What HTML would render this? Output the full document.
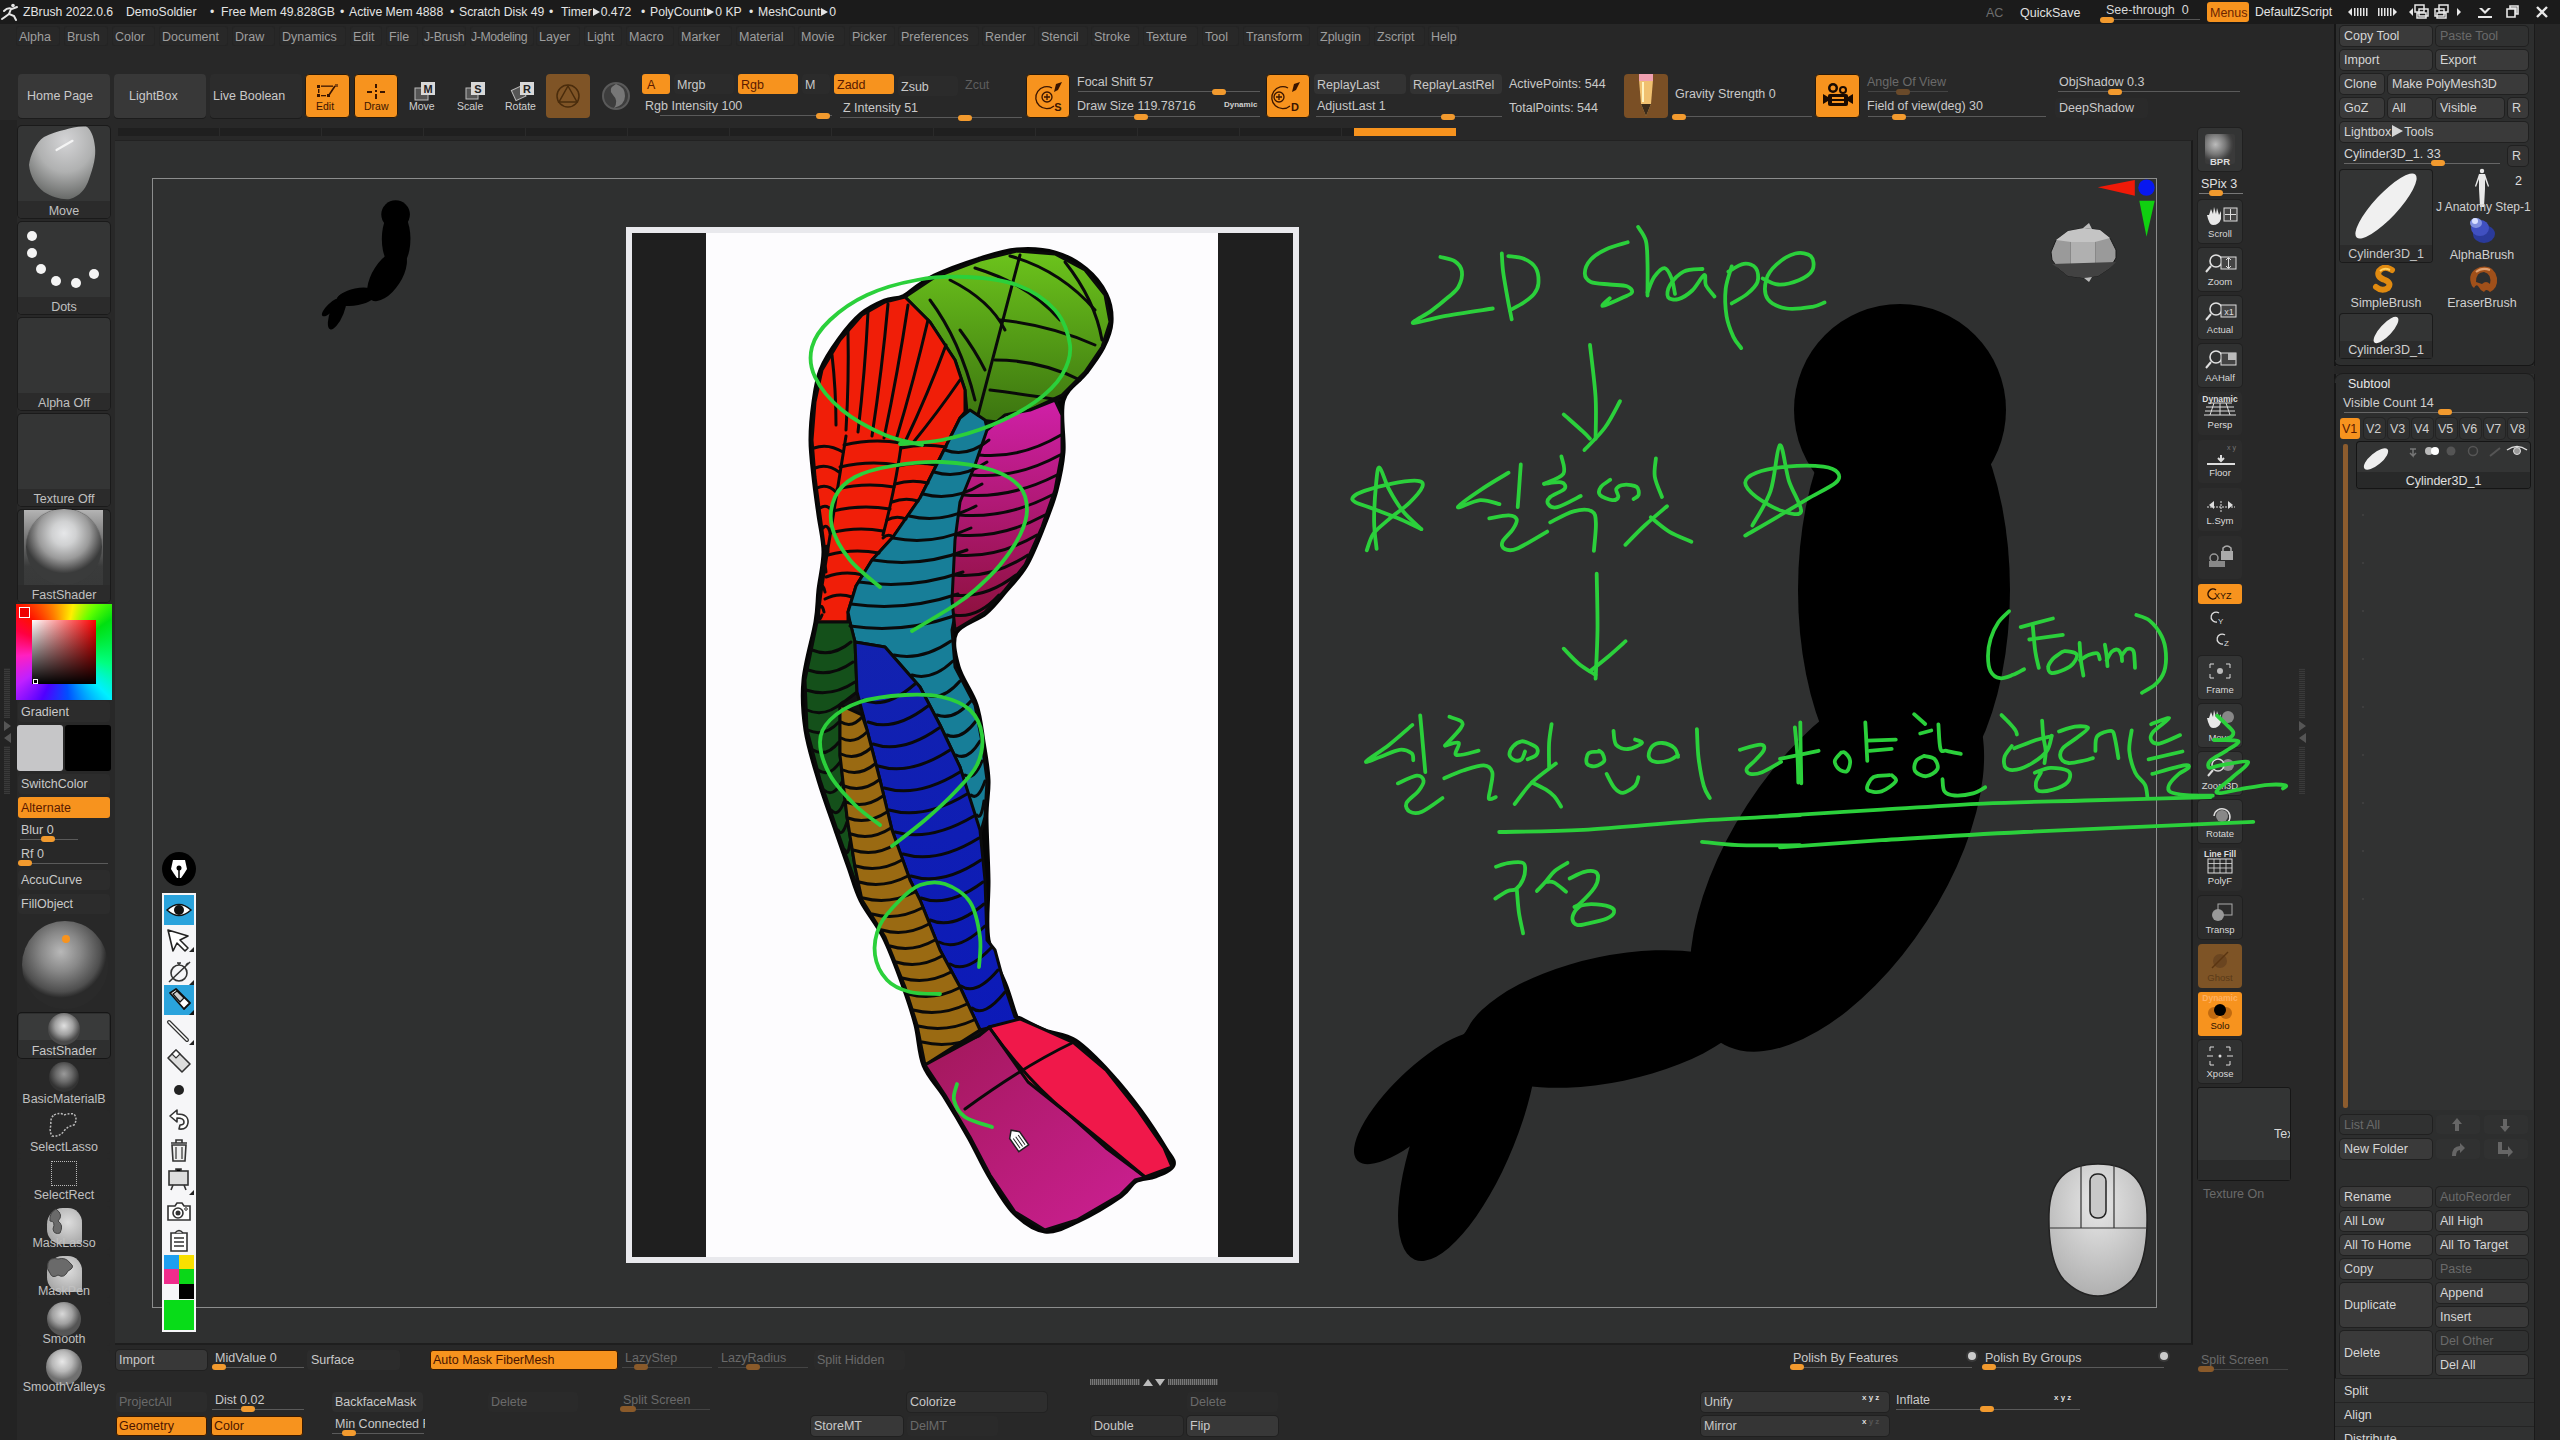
<!DOCTYPE html>
<html><head><meta charset="utf-8">
<style>
*{margin:0;padding:0;box-sizing:border-box}
html,body{width:2560px;height:1440px;overflow:hidden;background:#282828;font-family:"Liberation Sans",sans-serif;color:#c8c8c8}
.a{position:absolute}
.t{position:absolute;white-space:nowrap;font-size:12.5px;line-height:17px;color:#c9c9c9}
.b{position:absolute;background:#383838;border-radius:4px;box-shadow:0 1px 0 #1c1c1c}
.bd{position:absolute;background:#2b2b2b;border-radius:4px}
.o{position:absolute;background:#f7931e;border-radius:4px}
.mi{position:absolute;top:26px;height:20px;padding-top:1px;background:#282828;border-radius:3px;font-size:12.5px;line-height:20px;color:#9e9e9e;padding-left:3px;white-space:nowrap;box-shadow:inset 0 0 0 1px #242424}
.tri{display:inline-block;width:0;height:0;border-left:7px solid #e4e4e4;border-top:4.5px solid transparent;border-bottom:4.5px solid transparent;margin:0 1px 0 1px;vertical-align:0px}
.knob{position:absolute;width:14px;height:6px;background:#f29a2e;border-radius:3px}
.sl{position:absolute;height:1px;background:#5a5a5a}
</style></head><body>
<!-- title bar -->
<div class="a" style="left:0;top:0;width:2560px;height:24px;background:#1b1b1b"></div>
<!-- menu bar -->
<div class="a" style="left:0;top:24px;width:2334px;height:26px;background:#272727"></div>
<!-- left tray -->
<div class="a" style="left:0;top:120px;width:114px;height:1320px;background:#282828"></div>
<!-- canvas -->
<div class="a" style="left:115px;top:140px;width:2078px;height:1205px;background:#2f3030;border-right:2px solid #1a1a1a;border-bottom:2px solid #1e1e1e;border-top:1px solid #222"></div>
<div class="a" style="left:152px;top:178px;width:2005px;height:1130px;border:1px solid #8c8d8d"></div>
<!-- document image -->
<div class="a" style="left:626px;top:227px;width:673px;height:1036px;background:#e9e9ed"></div>
<div class="a" style="left:632px;top:233px;width:661px;height:1024px;background:#1f1f1f"></div>
<div class="a" style="left:706px;top:233px;width:512px;height:1024px;background:#fdfcfe"></div>
<!-- right tray -->


<svg class="a" style="left:0;top:0" width="2560" height="1440" viewBox="0 0 2560 1440">
<defs><g id="sil" fill="#000">
<circle cx="1900" cy="410" r="106"/>
<ellipse cx="1904" cy="590" rx="106" ry="220"/>
<ellipse cx="1837" cy="863" rx="214" ry="107" transform="rotate(-57 1837 863)"/>
<ellipse cx="1611" cy="1019" rx="150" ry="63" transform="rotate(-11.7 1611 1019)"/>
<ellipse cx="1422" cy="1098" rx="90" ry="30" transform="rotate(-44 1422 1098)"/>
<ellipse cx="1468" cy="1128" rx="142" ry="49" transform="rotate(-68 1468 1128)"/>
</g></defs>
<use href="#sil"/>
<use href="#sil" transform="translate(139.1 159.15) scale(0.135)"/>
</svg>
<svg class="a" style="left:0;top:0" width="2560" height="1440" viewBox="0 0 2560 1440">
<defs><linearGradient id="ggr" x1="0" y1="0" x2="0" y2="1"><stop offset="0" stop-color="#6cc41c"/><stop offset="1" stop-color="#3c7410"/></linearGradient><linearGradient id="gmg" x1="0" y1="0" x2="0" y2="1"><stop offset="0" stop-color="#d020a8"/><stop offset="1" stop-color="#8a1038"/></linearGradient><linearGradient id="gfi" x1="0" y1="0" x2="1" y2="1"><stop offset="0" stop-color="#a01858"/><stop offset="1" stop-color="#d02098"/></linearGradient><linearGradient id="gbl" x1="0" y1="0" x2="0" y2="1"><stop offset="0" stop-color="#1222b0"/><stop offset="1" stop-color="#0c1ab8"/></linearGradient></defs>
<path d="M905,297 C910.0,293.7 922.5,283.2 935,277 C947.5,270.8 966.3,264.3 980,260 C993.7,255.7 1004.5,252.0 1017,251 C1029.5,250.0 1043.7,250.8 1055,254 C1066.3,257.2 1076.7,263.2 1085,270 C1093.3,276.8 1100.8,286.3 1105,295 C1109.2,303.7 1110.5,313.3 1110,322 C1109.5,330.7 1106.2,338.7 1102,347 C1097.8,355.3 1091.7,363.2 1085,372 C1078.3,380.8 1065.8,386.7 1062,400 C1058.2,413.3 1063.2,437.0 1062,452 C1060.8,467.0 1058.3,477.5 1055,490 C1051.7,502.5 1047.0,514.5 1042,527 C1037.0,539.5 1031.2,554.5 1025,565 C1018.8,575.5 1011.7,582.2 1005,590 C998.3,597.8 993.3,605.0 985,612 C976.7,619.0 959.7,622.8 955,632 C950.3,641.2 953.7,654.8 957,667 C960.3,679.2 970.8,692.5 975,705 C979.2,717.5 980.0,729.5 982,742 C984.0,754.5 986.5,767.5 987,780 C987.5,792.5 985.0,800.3 985,817 C985.0,833.7 986.7,859.5 987,880 C987.3,900.5 984.0,922.2 987,940 C990.0,957.8 1000.3,974.2 1005,987 C1009.7,999.8 1012.5,1011.5 1015,1017 C1017.5,1022.5 1015.0,1017.5 1020,1020 C1025.0,1022.5 1035.8,1028.3 1045,1032 C1054.2,1035.7 1064.2,1034.8 1075,1042 C1085.8,1049.2 1099.2,1063.3 1110,1075 C1120.8,1086.7 1130.8,1099.5 1140,1112 C1149.2,1124.5 1159.7,1141.2 1165,1150 C1170.3,1158.8 1173.7,1160.8 1172,1165 C1170.3,1169.2 1161.2,1172.5 1155,1175 C1148.8,1177.5 1140.8,1176.7 1135,1180 C1129.2,1183.3 1129.7,1188.3 1120,1195 C1110.3,1201.7 1089.5,1214.2 1077,1220 C1064.5,1225.8 1055.3,1231.3 1045,1230 C1034.7,1228.7 1024.2,1221.2 1015,1212 C1005.8,1202.8 997.5,1187.5 990,1175 C982.5,1162.5 977.5,1150.3 970,1137 C962.5,1123.7 952.5,1107.0 945,1095 C937.5,1083.0 929.7,1076.7 925,1065 C920.3,1053.3 920.3,1038.0 917,1025 C913.7,1012.0 910.3,1001.7 905,987 C899.7,972.3 892.2,951.5 885,937 C877.8,922.5 867.8,911.7 862,900 C856.2,888.3 854.2,878.7 850,867 C845.8,855.3 842.0,844.5 837,830 C832.0,815.5 825.0,796.7 820,780 C815.0,763.3 809.5,746.7 807,730 C804.5,713.3 803.3,698.0 805,680 C806.7,662.0 814.5,637.0 817,622 C819.5,607.0 818.7,601.7 820,590 C821.3,578.3 825.0,564.5 825,552 C825.0,539.5 821.7,527.5 820,515 C818.3,502.5 816.3,489.5 815,477 C813.7,464.5 812.0,452.5 812,440 C812.0,427.5 813.3,413.7 815,402 C816.7,390.3 817.8,380.3 822,370 C826.2,359.7 833.3,349.2 840,340 C846.7,330.8 854.5,321.3 862,315 C869.5,308.7 877.8,305.0 885,302 C892.2,299.0 896.7,301.2 905,297 C913.3,292.8 922.5,283.2 935,277 C947.5,270.8 972.5,262.8 980,260" fill="#111" stroke="#050505" stroke-width="7"/>
<path d="M905,297 L935,277 L980,260 L1017,251 L1055,254 L1085,270 L1105,295 L1110,322 L1102,347 L1085,372 L1062,395 L1030,410 L997,422 L980,420 L967,412 L965,390 L955,360 L930,322Z" fill="url(#ggr)" stroke="#0a0a0a" stroke-width="3" stroke-linejoin="round"/>
<path d="M905,297 L885,302 L862,315 L840,340 L822,370 L815,402 L812,440 L815,477 L820,515 L825,552 L820,590 L817,622 L848,622 L848,612 L856,586 L872,560 L893,537 L920,498 L940,458 L960,418 L965,412 L965,390 L955,360 L930,322Z" fill="#f01e08" stroke="#0a0a0a" stroke-width="3" stroke-linejoin="round"/>
<path d="M960,418 L970,410 L985,420 L990,440 L987,470 L975,515 L960,590 L952,630 L955,667 L975,705 L982,742 L987,780 L985,817 L980,835 L960,767 L940,725 L920,687 L885,647 L855,642 L850,622 L848,612 L856,586 L872,560 L893,537 L920,498 L940,458 L960,418Z" fill="#177e98" stroke="#0a0a0a" stroke-width="3" stroke-linejoin="round"/>
<path d="M987,430 L1005,415 L1030,410 L1055,400 L1062,415 L1062,452 L1055,490 L1042,527 L1025,565 L1005,590 L985,612 L955,630 L952,600 L955,540 L960,502 L975,465Z" fill="url(#gmg)" stroke="#0a0a0a" stroke-width="3" stroke-linejoin="round"/>
<path d="M817,622 L850,622 L855,642 L857,692 L840,705 L840,755 L847,817 L855,867 L862,900 L850,867 L837,830 L820,780 L807,730 L805,680Z" fill="#14501a" stroke="#0a0a0a" stroke-width="3" stroke-linejoin="round"/>
<path d="M855,642 L885,647 L920,687 L940,725 L960,767 L980,830 L985,880 L987,940 L995,950 L1005,987 L1015,1017 L1020,1020 L980,1030 L960,987 L940,950 L920,900 L910,880 L892,830 L880,780 L867,730 L857,692Z" fill="url(#gbl)" stroke="#0a0a0a" stroke-width="3" stroke-linejoin="round"/>
<path d="M840,705 L862,715 L867,730 L880,780 L892,830 L910,880 L920,900 L940,950 L960,987 L980,1030 L925,1065 L917,1025 L905,987 L885,937 L862,900 L855,867 L847,817 L840,755Z" fill="#9a6a12" stroke="#0a0a0a" stroke-width="3" stroke-linejoin="round"/>
<path d="M925,1065 L980,1035 L990,1027 L1020,1020 L1045,1032 L1075,1042 L1110,1075 L1140,1112 L1165,1150 L1172,1165 L1155,1175 L1135,1180 L1120,1195 L1077,1220 L1045,1230 L1015,1212 L990,1175 L970,1137 L945,1095Z" fill="url(#gfi)" stroke="#0a0a0a" stroke-width="3" stroke-linejoin="round"/>
<path d="M989,1027 L1020,1019 L1045,1030 L1074,1043 L1106,1070 L1137,1109 L1164,1148 L1172,1167 L1145,1177 L1106,1148 L1067,1113 L1028,1082Z" fill="#f0184a" stroke="#0a0a0a" stroke-width="3" stroke-linejoin="round"/>
<g fill="none" stroke="#0a0a0a" stroke-width="3" stroke-linecap="round">
<path d="M863,700 Q885,710 915,684"/>
<path d="M868,722 Q894,732 928,706"/>
<path d="M873,744 Q902,754 939,728"/>
<path d="M878,766 Q910,776 950,750"/>
<path d="M884,788 Q918,798 960,772"/>
<path d="M889,810 Q924,820 967,794"/>
<path d="M895,832 Q930,842 974,816"/>
<path d="M903,854 Q937,864 979,838"/>
<path d="M911,876 Q942,886 981,860"/>
<path d="M921,898 Q948,908 983,882"/>
<path d="M930,920 Q953,930 984,904"/>
<path d="M939,942 Q958,952 985,926"/>
<path d="M950,964 Q966,974 991,948"/>
<path d="M961,986 Q976,996 998,970"/>
<path d="M972,1008 Q984,1018 1005,992"/>
<path d="M841,722 Q852,729 863,716"/>
<path d="M841,738 Q854,745 867,732"/>
<path d="M841,754 Q856,761 871,748"/>
<path d="M843,770 Q859,777 875,764"/>
<path d="M844,786 Q862,793 879,780"/>
<path d="M846,802 Q865,809 883,796"/>
<path d="M848,818 Q867,825 887,812"/>
<path d="M851,834 Q871,841 891,828"/>
<path d="M853,850 Q875,857 896,844"/>
<path d="M856,866 Q879,873 902,860"/>
<path d="M859,882 Q883,889 908,876"/>
<path d="M863,898 Q889,905 915,892"/>
<path d="M872,914 Q897,921 922,908"/>
<path d="M882,930 Q905,937 929,924"/>
<path d="M890,946 Q912,953 935,940"/>
<path d="M896,962 Q919,969 942,956"/>
<path d="M902,978 Q927,985 951,972"/>
<path d="M908,994 Q934,1001 959,988"/>
<path d="M913,1010 Q940,1017 967,1004"/>
<path d="M918,1026 Q946,1033 974,1020"/>
<path d="M922,1042 Q950,1049 979,1036"/>
<path d="M812,650 Q832,658 851,642"/>
<path d="M808,670 Q831,678 853,662"/>
<path d="M806,690 Q831,698 855,682"/>
<path d="M807,710 Q825,718 843,702"/>
<path d="M808,730 Q824,738 839,722"/>
<path d="M813,750 Q826,758 839,742"/>
<path d="M818,770 Q829,778 840,762"/>
<path d="M824,790 Q833,798 842,782"/>
<path d="M831,810 Q838,818 844,802"/>
<path d="M838,830 Q842,838 847,822"/>
<path d="M845,850 Q848,858 850,842"/>
<path d="M979,455 Q1020,459 1061,435"/>
<path d="M972,475 Q1016,479 1060,455"/>
<path d="M964,495 Q1010,499 1057,475"/>
<path d="M959,515 Q1006,519 1052,495"/>
<path d="M957,535 Q1001,539 1045,515"/>
<path d="M955,555 Q996,559 1037,535"/>
<path d="M954,575 Q991,579 1028,555"/>
<path d="M953,595 Q985,599 1016,575"/>
<path d="M954,615 Q977,619 999,595"/>
<path d="M945,450 Q967,458 989,440"/>
<path d="M934,472 Q960,480 987,462"/>
<path d="M923,494 Q953,502 982,484"/>
<path d="M909,516 Q942,524 976,506"/>
<path d="M893,538 Q932,546 971,528"/>
<path d="M873,560 Q920,568 967,550"/>
<path d="M859,582 Q911,590 963,572"/>
<path d="M851,604 Q905,612 958,594"/>
<path d="M850,626 Q902,634 954,616"/>
<path d="M894,655 Q922,661 951,641"/>
<path d="M912,675 Q932,681 953,661"/>
<path d="M926,695 Q943,701 960,681"/>
<path d="M937,715 Q954,721 971,701"/>
<path d="M947,735 Q961,741 976,721"/>
<path d="M956,755 Q968,761 980,741"/>
<path d="M965,775 Q974,781 982,761"/>
<path d="M971,795 Q978,801 985,781"/>
<path d="M977,815 Q981,821 984,801"/>
<path d="M868,312 Q865,372 858,432"/>
<path d="M888,304 Q882,370 872,436"/>
<path d="M908,305 Q898,372 884,438"/>
<path d="M928,320 Q914,380 896,440"/>
<path d="M946,345 Q928,394 905,442"/>
<path d="M960,380 Q938,412 912,444"/>
<path d="M848,332 Q849,381 846,430"/>
<path d="M832,355 Q836,390 836,425"/>
<path d="M846,436 Q836,500 825,567 T822,615"/>
<path d="M902,440 Q895,490 883,535"/>
<path d="M814,448 Q828,443 843,452"/>
<path d="M815,468 Q827,463 839,472"/>
<path d="M817,488 Q827,483 836,492"/>
<path d="M820,508 Q827,503 833,512"/>
<path d="M823,528 Q827,523 830,532"/>
<path d="M825,548 Q827,543 828,552"/>
<path d="M824,568 Q825,563 826,572"/>
<path d="M821,588 Q823,583 825,592"/>
<path d="M819,608 Q822,603 824,612"/>
<path d="M844,445 Q873,438 901,443"/>
<path d="M840,467 Q869,460 898,465"/>
<path d="M837,489 Q865,482 894,487"/>
<path d="M833,511 Q861,504 890,509"/>
<path d="M830,533 Q857,526 883,531"/>
<path d="M828,555 Q853,548 879,553"/>
<path d="M826,577 Q844,570 863,575"/>
<path d="M825,599 Q838,592 852,597"/>
<path d="M901,448 Q923,443 946,447"/>
<path d="M898,466 Q917,461 936,465"/>
<path d="M895,484 Q911,479 928,483"/>
<path d="M892,502 Q905,497 918,501"/>
<path d="M887,520 Q896,515 906,519"/>
<path d="M883,538 Q888,533 893,537"/>
<path d="M1020,255 Q1000,330 978,415"/>
<path d="M930,300 Q960,340 975,400"/>
<path d="M950,280 Q990,300 1005,330"/>
<path d="M975,268 Q1030,285 1060,320"/>
<path d="M1010,256 Q1060,270 1095,310"/>
<path d="M1065,262 Q1095,300 1102,340"/>
<path d="M995,360 Q1040,360 1080,380"/>
<path d="M990,390 Q1030,395 1060,400"/>
<path d="M1000,320 Q1050,325 1095,345"/>
<path d="M960,330 Q975,350 985,370"/>
<path d="M989,1027 Q1028,1082 1067,1113 T1145,1177"/>
<path d="M965,1109 Q1024,1066 1072,1043"/>
</g>
<g transform="translate(1008,1128) rotate(-35 10 12)"><path d="M4 6 L10 0 L16 6 L16 22 L4 22Z" fill="#fff" stroke="#222" stroke-width="1.5"/><path d="M7 8 v12 M10 8 v12 M13 8 v12" stroke="#222" stroke-width="1"/></g>
</svg>


<!-- gizmo -->
<svg class="a" style="left:2040px;top:170px" width="130" height="130" viewBox="2040 170 130 130">
<path d="M2097.8,187.2 L2134.8,179.9 L2134.8,195.7Z" fill="#f01a08"/>
<circle cx="2146.5" cy="187.6" r="8.2" fill="#0818f0"/>
<path d="M2139.3,200.7 L2154.7,200.7 L2146.5,236.8Z" fill="#10d010"/>
<path d="M2051,252 L2056,240 L2068,231 L2084,228 L2100,230 L2110,238 L2116,250 L2116,258 L2110,268 L2098,276 L2084,278 L2068,276 L2058,268 L2052,260Z" fill="#9a9a9a" stroke="#1a1a1a" stroke-width="1"/>
<path d="M2071,231 L2071,270 M2095,230 L2095,272" stroke="#777" stroke-width="1"/>
<path d="M2071,242 L2084,241 L2095,242 L2095,264 L2071,264Z" fill="#b0b0b0"/>
<path d="M2056,240 L2068,231 L2084,228 L2100,230 L2110,238 L2095,242 L2071,242Z" fill="#c4c4c4"/>
<path d="M2052,264 L2116,262 L2110,268 L2098,276 L2084,278 L2068,276 L2058,268Z" fill="#424242"/>
<path d="M2083,228 L2089,223 L2092,229Z M2084,278 L2089,282 L2092,277Z" fill="#bbb"/>
</svg>
<!-- mouse -->
<svg class="a" style="left:2046px;top:1162px" width="104" height="136" viewBox="0 0 104 136"><defs><radialGradient id="gms" cx="0.5" cy="0.3" r="0.8"><stop offset="0" stop-color="#e8e8e8"/><stop offset="1" stop-color="#a8a8a8"/></radialGradient></defs><path d="M52 2 Q100 2 101 52 Q102 100 86 118 Q70 134 52 134 Q34 134 18 118 Q2 100 3 52 Q4 2 52 2Z" fill="url(#gms)" stroke="#222" stroke-width="1.5"/><path d="M3 66 H101 M35 3 V66 M68 3 V66" stroke="#333" stroke-width="1.2"/><rect x="44" y="12" width="16" height="44" rx="7" fill="#c8c8c8" stroke="#222" stroke-width="1.5"/></svg>

<!-- ===== TITLE ===== -->
<svg class="a" style="left:1px;top:3px" width="20" height="18" viewBox="0 0 20 18"><g fill="none" stroke="#e6e6e6" stroke-width="2" stroke-linecap="round"><path d="M3 8 Q7 4 11 6 L16 4"/><path d="M10 6 L8 11 L13 13 L15 17"/><path d="M8 11 Q4 14 1 16"/></g><circle cx="12" cy="2.5" r="1.8" fill="#e6e6e6"/></svg>
<div class="t" style="left:23px;top:4px;font-size:12.2px;color:#e4e4e4">ZBrush 2022.0.6</div>
<div class="t" style="left:126px;top:4px;font-size:12.2px;color:#e4e4e4">DemoSoldier</div>
<div class="t" style="left:210px;top:4px;font-size:12.2px;color:#e4e4e4">&#8226;</div><div class="t" style="left:221px;top:4px;font-size:12.2px;color:#e4e4e4">Free Mem 49.828GB</div>
<div class="t" style="left:340px;top:4px;font-size:12.2px;color:#e4e4e4">&#8226;</div><div class="t" style="left:349px;top:4px;font-size:12.2px;color:#e4e4e4">Active Mem 4888</div>
<div class="t" style="left:450px;top:4px;font-size:12.2px;color:#e4e4e4">&#8226;</div><div class="t" style="left:459px;top:4px;font-size:12.2px;color:#e4e4e4">Scratch Disk 49</div>
<div class="t" style="left:549px;top:4px;font-size:12.2px;color:#e4e4e4">&#8226;</div><div class="t" style="left:561px;top:4px;font-size:12.2px;color:#e4e4e4">Timer<span class="tri"></span>0.472</div>
<div class="t" style="left:641px;top:4px;font-size:12.2px;color:#e4e4e4">&#8226;</div><div class="t" style="left:650px;top:4px;font-size:12.2px;color:#e4e4e4">PolyCount<span class="tri"></span>0 KP</div>
<div class="t" style="left:749px;top:4px;font-size:12.2px;color:#e4e4e4">&#8226;</div><div class="t" style="left:758px;top:4px;font-size:12.2px;color:#e4e4e4">MeshCount<span class="tri"></span>0</div>
<div class="t" style="left:1986px;top:5px;font-size:12.5px;color:#6e6e6e">AC</div>
<div class="t" style="left:2020px;top:5px;font-size:12.5px;color:#e0e0e0">QuickSave</div>
<div class="t" style="left:2106px;top:2px;font-size:12.5px;color:#d8d8d8">See-through&nbsp; 0</div>
<div class="sl" style="left:2100px;top:19px;width:100px;background:#555"></div>
<div class="knob" style="left:2100px;top:17px"></div>
<div class="o" style="left:2207px;top:2px;width:42px;height:20px;border-radius:3px"></div>
<div class="t" style="left:2210px;top:5px;font-size:12.5px;color:#6b2400">Menus</div>
<div class="t" style="left:2255px;top:4px;font-size:12.2px;color:#e4e4e4">DefaultZScript</div>
<svg class="a" style="left:2345px;top:4px" width="210" height="16" viewBox="0 0 210 16"><g fill="#e8e8e8">
<path d="M3 8 L7 4 L7 12Z"/><rect x="9" y="4" width="1.5" height="8"/><rect x="12" y="4" width="1.5" height="8"/><rect x="15" y="4" width="1.5" height="8"/><rect x="18" y="4" width="1.5" height="8"/><rect x="21" y="4" width="1.5" height="8"/>
<rect x="33" y="4" width="1.5" height="8"/><rect x="36" y="4" width="1.5" height="8"/><rect x="39" y="4" width="1.5" height="8"/><rect x="42" y="4" width="1.5" height="8"/><rect x="45" y="4" width="1.5" height="8"/><path d="M48 4 L52 8 L48 12Z"/>
<path d="M64 8 L68 4 L68 12Z"/><path d="M112 4 L116 8 L112 12Z"/>
<rect x="133" y="12" width="14" height="2"/><path d="M134 4 L140 10 L146 4 L143 4 L140 7 L137 4Z"/>
<path d="M165 2 h8 v8 h-2 v-6 h-6z M162 5 h8 v8 h-8z" fill="none" stroke="#e8e8e8" stroke-width="1.6"/>
<path d="M192 3 L202 13 M202 3 L192 13" stroke="#e8e8e8" stroke-width="2.4"/>
</g><g fill="none" stroke="#e8e8e8" stroke-width="1.5"><rect x="70" y="1" width="9" height="7"/><rect x="74" y="5" width="9" height="7"/><rect x="72" y="9" width="9" height="5"/><rect x="94" y="1" width="9" height="7"/><rect x="90" y="5" width="9" height="7"/><rect x="92" y="9" width="9" height="5"/></g></svg>

<!-- ===== MENU ===== -->
<div class="mi" style="left:16px;width:44px">Alpha</div>
<div class="mi" style="left:64px;width:44px">Brush</div>
<div class="mi" style="left:112px;width:43px">Color</div>
<div class="mi" style="left:159px;width:69px">Document</div>
<div class="mi" style="left:232px;width:43px">Draw</div>
<div class="mi" style="left:279px;width:67px">Dynamics</div>
<div class="mi" style="left:350px;width:32px">Edit</div>
<div class="mi" style="left:386px;width:32px">File</div>
<div class="mi" style="left:422px;width:44px;font-size:12.3px;padding-left:2px;letter-spacing:-0.3px">J-Brush</div>
<div class="mi" style="left:470px;width:64px;font-size:12.3px;padding-left:1px;letter-spacing:-0.4px">J-Modeling</div>
<div class="mi" style="left:536px;width:44px">Layer</div>
<div class="mi" style="left:584px;width:38px">Light</div>
<div class="mi" style="left:626px;width:48px">Macro</div>
<div class="mi" style="left:678px;width:54px">Marker</div>
<div class="mi" style="left:736px;width:59px">Material</div>
<div class="mi" style="left:798px;width:47px">Movie</div>
<div class="mi" style="left:849px;width:46px">Picker</div>
<div class="mi" style="left:898px;width:81px">Preferences</div>
<div class="mi" style="left:982px;width:53px">Render</div>
<div class="mi" style="left:1038px;width:50px">Stencil</div>
<div class="mi" style="left:1091px;width:48px">Stroke</div>
<div class="mi" style="left:1143px;width:55px">Texture</div>
<div class="mi" style="left:1202px;width:37px">Tool</div>
<div class="mi" style="left:1243px;width:67px">Transform</div>
<div class="mi" style="left:1317px;width:53px">Zplugin</div>
<div class="mi" style="left:1374px;width:51px">Zscript</div>
<div class="mi" style="left:1428px;width:31px">Help</div>

<!-- ===== SHELF ===== -->
<div class="b" style="left:18px;top:74px;width:92px;height:44px;background:#383838"></div>
<div class="t" style="left:27px;top:88px;font-size:12.5px">Home Page</div>
<div class="b" style="left:114px;top:74px;width:92px;height:44px;background:#383838"></div>
<div class="t" style="left:129px;top:88px;font-size:12.5px">LightBox</div>
<div class="b" style="left:210px;top:74px;width:92px;height:44px;background:#2c2c2c"></div>
<div class="t" style="left:213px;top:88px;font-size:12.5px">Live Boolean</div>

<div class="o" style="left:305px;top:74px;width:45px;height:44px;border:1px solid #2a1a08"></div>
<svg class="a" style="left:316px;top:83px" width="24" height="16" viewBox="0 0 24 16"><g fill="#3a1500"><rect x="1" y="2" width="3" height="3"/><rect x="1" y="11" width="3" height="3"/><rect x="11" y="11" width="3" height="3"/><rect x="19" y="1" width="3" height="3" fill="#8a4a10"/><rect x="2" y="6" width="1.4" height="4"/><rect x="5" y="2.5" width="12" height="1.3"/><rect x="5" y="12" width="5" height="1.3"/></g><path d="M13 12 L19 3" stroke="#3a1500" stroke-width="1.6"/></svg>
<div class="t" style="left:316px;top:98px;font-size:10.5px;color:#3a1500">Edit</div>
<div class="o" style="left:354px;top:74px;width:44px;height:44px;border:1px solid #2a1a08"></div>
<svg class="a" style="left:366px;top:84px" width="20" height="16" viewBox="0 0 20 16"><g fill="#3a1500"><rect x="9" y="0" width="2" height="4"/><rect x="9" y="6" width="2" height="2"/><rect x="9" y="10" width="2" height="5"/><rect x="1" y="7" width="5" height="2"/><rect x="14" y="7" width="5" height="2"/></g></svg>
<div class="t" style="left:364px;top:98px;font-size:10.5px;color:#3a1500">Draw</div>

<svg class="a" style="left:414px;top:81px" width="24" height="20" viewBox="0 0 24 20"><rect x="1" y="7" width="13" height="12" fill="#555" stroke="#bbb" stroke-width="1"/><rect x="7" y="1" width="14" height="13" fill="#d8d8d8"/><text x="14" y="12" font-family="Liberation Sans" font-weight="bold" font-size="11" fill="#222" text-anchor="middle">M</text></svg>
<div class="t" style="left:409px;top:98px;font-size:10.5px;color:#d0d0d0">Move</div>
<svg class="a" style="left:465px;top:81px" width="24" height="20" viewBox="0 0 24 20"><rect x="1" y="7" width="12" height="11" fill="#555" stroke="#bbb" stroke-width="1"/><rect x="6" y="1" width="14" height="13" fill="#d8d8d8"/><text x="13" y="12" font-family="Liberation Sans" font-weight="bold" font-size="11" fill="#222" text-anchor="middle">S</text></svg>
<div class="t" style="left:457px;top:98px;font-size:10.5px;color:#d0d0d0">Scale</div>
<svg class="a" style="left:510px;top:81px" width="26" height="22" viewBox="0 0 26 22"><rect x="3" y="7" width="11" height="11" fill="#555" stroke="#bbb" stroke-width="1" transform="rotate(-25 8 12)"/><rect x="10" y="1" width="14" height="13" fill="#d8d8d8"/><text x="17" y="12" font-family="Liberation Sans" font-weight="bold" font-size="11" fill="#222" text-anchor="middle">R</text></svg>
<div class="t" style="left:505px;top:98px;font-size:10.5px;color:#d0d0d0">Rotate</div>

<div class="b" style="left:546px;top:74px;width:44px;height:44px;background:#7f5426;box-shadow:none"></div>
<svg class="a" style="left:555px;top:83px" width="26" height="26" viewBox="0 0 26 26"><g fill="none" stroke="#4a2c0c" stroke-width="1.5"><circle cx="13" cy="13" r="11"/><path d="M13 3 L22 19 L4 19 Z"/></g></svg>
<svg class="a" style="left:601px;top:81px" width="30" height="30" viewBox="0 0 30 30"><circle cx="15" cy="15" r="13" fill="#3d3d3d" stroke="#5a5a5a" stroke-width="2"/><path d="M15 3 Q6 8 12 14 Q18 20 13 27 Q24 24 24 15 Q24 6 15 3Z" fill="#777"/></svg>

<div class="o" style="left:642px;top:74px;width:28px;height:20px;border-radius:3px"></div>
<div class="t" style="left:647px;top:77px;color:#5a1a00">A</div>
<div class="bd" style="left:674px;top:74px;width:60px;height:20px"></div>
<div class="t" style="left:677px;top:77px">Mrgb</div>
<div class="o" style="left:738px;top:74px;width:60px;height:20px;border-radius:3px"></div>
<div class="t" style="left:741px;top:77px;color:#5a1a00">Rgb</div>
<div class="bd" style="left:802px;top:74px;width:28px;height:20px"></div>
<div class="t" style="left:805px;top:77px">M</div>
<div class="o" style="left:834px;top:74px;width:60px;height:20px;border-radius:3px"></div>
<div class="t" style="left:837px;top:77px;color:#5a1a00">Zadd</div>
<div class="bd" style="left:898px;top:76px;width:60px;height:20px"></div>
<div class="t" style="left:901px;top:79px">Zsub</div>
<div class="t" style="left:965px;top:77px;color:#5e5e5e">Zcut</div>
<div class="t" style="left:645px;top:98px">Rgb Intensity 100</div>
<div class="sl" style="left:660px;top:115px;width:172px"></div>
<div class="knob" style="left:816px;top:113px"></div>
<div class="t" style="left:843px;top:100px">Z Intensity 51</div>
<div class="sl" style="left:840px;top:117px;width:182px"></div>
<div class="knob" style="left:958px;top:115px"></div>

<div class="o" style="left:1026px;top:74px;width:44px;height:44px;border:1px solid #2a1a08"></div>
<svg class="a" style="left:1032px;top:80px" width="34" height="34" viewBox="0 0 34 34"><g fill="none" stroke="#3a1500" stroke-width="1.3"><path d="M20 8 A11 11 0 1 0 22 26"/><circle cx="15" cy="17" r="5"/><path d="M15 14v6M12 17h6"/></g><path d="M24 4 L30 2 L26 10 L22 12Z" fill="#3a1500"/><text x="26" y="31" font-family="Liberation Sans" font-weight="bold" font-size="11" fill="#3a1500" text-anchor="middle">S</text></svg>
<div class="t" style="left:1077px;top:74px">Focal Shift 57</div>
<div class="sl" style="left:1078px;top:91px;width:182px"></div>
<div class="knob" style="left:1212px;top:89px"></div>
<div class="t" style="left:1077px;top:98px">Draw Size 119.78716</div>
<div class="t" style="left:1224px;top:96px;font-size:8px;font-weight:bold;color:#d0d0d0">Dynamic</div>
<div class="sl" style="left:1078px;top:116px;width:182px"></div>
<div class="knob" style="left:1134px;top:114px"></div>
<div class="o" style="left:1266px;top:74px;width:44px;height:44px;border:1px solid #2a1a08"></div>
<svg class="a" style="left:1268px;top:80px" width="40" height="34" viewBox="0 0 40 34"><g fill="none" stroke="#3a1500" stroke-width="1.3"><path d="M20 8 A11 11 0 1 0 22 26"/><circle cx="11" cy="17" r="5"/><path d="M11 14v6M8 17h6"/></g><path d="M26 4 L32 2 L28 10 L24 12Z" fill="#3a1500"/><text x="27" y="31" font-family="Liberation Sans" font-weight="bold" font-size="11" fill="#3a1500" text-anchor="middle">D</text></svg>
<div class="bd" style="left:1314px;top:74px;width:92px;height:20px;background:#333"></div>
<div class="t" style="left:1317px;top:77px">ReplayLast</div>
<div class="bd" style="left:1410px;top:74px;width:92px;height:20px;background:#333"></div>
<div class="t" style="left:1413px;top:77px">ReplayLastRel</div>
<div class="t" style="left:1317px;top:98px">AdjustLast 1</div>
<div class="sl" style="left:1316px;top:116px;width:186px"></div>
<div class="knob" style="left:1441px;top:114px"></div>
<div class="t" style="left:1509px;top:76px">ActivePoints: 544</div>
<div class="t" style="left:1509px;top:100px">TotalPoints: 544</div>
<div class="b" style="left:1624px;top:74px;width:44px;height:44px;background:#7a4f25;box-shadow:none"></div>
<svg class="a" style="left:1634px;top:74px" width="24" height="44" viewBox="0 0 24 44"><path d="M5 0 h14 v6 l-2 24 l-5 12 l-5 -12 l-2 -24z" fill="#f0c070"/><rect x="5" y="0" width="14" height="7" fill="#f0a0b0"/><path d="M7 30 l5 12 l5 -12z" fill="#3a2a1a"/><path d="M9 8 v20" stroke="#fff3c0" stroke-width="2"/></svg>
<div class="t" style="left:1675px;top:86px">Gravity Strength 0</div>
<div class="sl" style="left:1672px;top:116px;width:140px"></div>
<div class="knob" style="left:1672px;top:114px"></div>
<div class="o" style="left:1815px;top:74px;width:45px;height:44px;border:1px solid #2a1a08"></div>
<svg class="a" style="left:1822px;top:82px" width="32" height="28" viewBox="0 0 32 28"><g fill="#1a0a00"><circle cx="11" cy="6" r="5"/><circle cx="21" cy="8" r="4"/><rect x="6" y="12" width="20" height="12" rx="2"/><path d="M6 15 L1 12 L1 22 L6 19Z"/><path d="M26 15 L31 12 L31 22 L26 19Z"/></g><g fill="#f7931e"><circle cx="11" cy="6" r="2.5"/><circle cx="21" cy="8" r="2"/><rect x="10" y="15" width="12" height="2"/><rect x="10" y="19" width="12" height="2"/></g></svg>
<div class="t" style="left:1867px;top:74px;color:#6a6a6a">Angle Of View</div>
<div class="sl" style="left:1868px;top:91px;width:80px;background:#444"></div>
<div class="knob" style="left:1896px;top:89px;background:#6a4a2a"></div>
<div class="t" style="left:1867px;top:98px">Field of view(deg) 30</div>
<div class="sl" style="left:1868px;top:116px;width:178px"></div>
<div class="knob" style="left:1892px;top:114px"></div>
<div class="t" style="left:2059px;top:74px">ObjShadow 0.3</div>
<div class="sl" style="left:2058px;top:91px;width:182px"></div>
<div class="knob" style="left:2108px;top:89px"></div>
<div class="bd" style="left:2055px;top:98px;width:93px;height:20px;background:#2a2a2a"></div>
<div class="t" style="left:2059px;top:100px">DeepShadow</div>

<!-- dark strip under shelf -->
<div class="a" style="left:118px;top:128px;width:1236px;height:8px;background:repeating-linear-gradient(90deg,#1f1f1f 0 101px,#2a2a2a 101px 102px)"></div>
<div class="a" style="left:1354px;top:128px;width:102px;height:8px;background:#f7931e"></div>


<!-- ===== LEFT TRAY ===== -->
<div class="a" style="left:0;top:120px;width:17px;height:1320px;background:#232323"></div>
<!-- Move brush -->
<div class="b" style="left:18px;top:126px;width:92px;height:92px;background:#343535;border-radius:4px;box-shadow:0 0 0 1px #1a1a1a"></div>
<div class="a" style="left:18px;top:201px;width:92px;height:17px;background:#2b2b2b;border-radius:0 0 4px 4px"></div>
<svg class="a" style="left:18px;top:126px" width="92" height="92" viewBox="0 0 92 92"><defs><radialGradient id="gmv" cx="0.55" cy="0.2" r="0.85"><stop offset="0" stop-color="#d4d4d6"/><stop offset="0.5" stop-color="#b0b1b1"/><stop offset="1" stop-color="#5e605e"/></radialGradient></defs><path d="M11 39 C12 30 18 16 26 11 C32 8 40 5 47 3.7 C53 2 60 0 68 0.5 C72 2 76 10 77 21 C78 30 76 40 70 56 C67 63 62 70 52 73 C44 74 34 71 26 66 C18 60 12 50 11 39Z" fill="url(#gmv)"/><path d="M38.5 24 L54.5 14.8" stroke="#f4f4f4" stroke-width="2.2" stroke-linecap="round"/></svg>
<div class="t" style="left:18px;top:203px;width:92px;text-align:center;color:#c0c0c0">Move</div>
<!-- Dots -->
<div class="b" style="left:18px;top:222px;width:92px;height:92px;background:#343535;box-shadow:0 0 0 1px #1a1a1a"></div>
<div class="a" style="left:18px;top:297px;width:92px;height:17px;background:#2b2b2b;border-radius:0 0 4px 4px"></div>
<svg class="a" style="left:18px;top:222px" width="92" height="92" viewBox="0 0 92 92"><g fill="#f4f4f4"><circle cx="14" cy="14" r="5"/><circle cx="14" cy="31" r="5"/><circle cx="23" cy="47" r="5"/><circle cx="38" cy="59" r="5"/><circle cx="58" cy="61" r="5"/><circle cx="76" cy="52" r="5"/></g></svg>
<div class="t" style="left:18px;top:299px;width:92px;text-align:center;color:#c0c0c0">Dots</div>
<!-- Alpha Off -->
<div class="b" style="left:18px;top:318px;width:92px;height:92px;background:#343535;box-shadow:0 0 0 1px #1a1a1a"></div>
<div class="a" style="left:18px;top:393px;width:92px;height:17px;background:#2b2b2b;border-radius:0 0 4px 4px"></div>
<div class="t" style="left:18px;top:395px;width:92px;text-align:center;color:#c0c0c0">Alpha Off</div>
<!-- Texture Off -->
<div class="b" style="left:18px;top:414px;width:92px;height:92px;background:#343535;box-shadow:0 0 0 1px #1a1a1a"></div>
<div class="a" style="left:18px;top:489px;width:92px;height:17px;background:#2b2b2b;border-radius:0 0 4px 4px"></div>
<div class="t" style="left:18px;top:491px;width:92px;text-align:center;color:#c0c0c0">Texture Off</div>
<!-- FastShader material -->
<div class="b" style="left:18px;top:510px;width:92px;height:92px;background:#2e2f2f;box-shadow:0 0 0 1px #1a1a1a"></div>
<div class="a" style="left:24px;top:510px;width:79px;height:75px;background:linear-gradient(180deg,#b4b4b4 0,#7a7a7a 35%,#3a3b3b 75%,#383939 100%)"></div><div class="a" style="left:26px;top:509px;width:76px;height:76px;border-radius:50%;background:radial-gradient(circle at 50% 32%,#e6e7e9 0,#d0d1d2 12px,#9a9a9a 26px,#555 36px,#3a3b3b 40px);box-shadow:0 -1px 1px rgba(0,0,0,0.35)"></div><div class="a" style="left:18px;top:585px;width:92px;height:17px;background:#2b2b2b;border-radius:0 0 4px 4px"></div>
<div class="t" style="left:18px;top:587px;width:92px;text-align:center;color:#c0c0c0">FastShader</div>
<!-- color picker -->
<div class="a" style="left:16px;top:604px;width:96px;height:96px;background:conic-gradient(from 315deg at 50% 50%, #ff1000 0deg,#ff8000 30deg,#ffee00 56deg,#60ff00 80deg,#00e010 100deg,#00ff80 150deg,#00f0ff 180deg,#0050ff 220deg,#5000ff 250deg,#c020ff 280deg,#ff20c0 310deg,#ff0040 340deg,#ff1000 360deg)"></div>

<div class="a" style="left:32px;top:620px;width:64px;height:64px;background:linear-gradient(180deg,rgba(0,0,0,0),#000),linear-gradient(90deg,#fff,#f00)"></div>
<div class="a" style="left:19px;top:607px;width:11px;height:11px;border:1.5px solid #fff;background:#e00"></div>
<div class="a" style="left:33px;top:679px;width:5px;height:5px;border:1px solid #fff;background:#000"></div>
<div class="bd" style="left:18px;top:701px;width:92px;height:21px;background:#2c2c2c"></div>
<div class="t" style="left:21px;top:704px">Gradient</div>
<div class="a" style="left:17px;top:725px;width:46px;height:46px;background:#c6c6c8;border-radius:3px"></div>
<div class="a" style="left:65px;top:725px;width:46px;height:46px;background:#000;border-radius:3px"></div>
<div class="bd" style="left:18px;top:774px;width:92px;height:20px;background:#2c2c2c"></div>
<div class="t" style="left:21px;top:776px">SwitchColor</div>
<div class="o" style="left:18px;top:797px;width:92px;height:21px;border-radius:3px"></div>
<div class="t" style="left:21px;top:800px;color:#5a1a00">Alternate</div>
<div class="t" style="left:21px;top:822px">Blur 0</div>
<div class="sl" style="left:20px;top:839px;width:58px"></div>
<div class="knob" style="left:41px;top:836px"></div>
<div class="t" style="left:21px;top:846px">Rf 0</div>
<div class="sl" style="left:18px;top:863px;width:90px"></div>
<div class="knob" style="left:18px;top:860px"></div>
<div class="bd" style="left:18px;top:870px;width:92px;height:20px;background:#2c2c2c"></div>
<div class="t" style="left:21px;top:872px">AccuCurve</div>
<div class="bd" style="left:18px;top:894px;width:92px;height:20px;background:#2c2c2c"></div>
<div class="t" style="left:21px;top:896px">FillObject</div>
<!-- collapse handle -->
<div class="a" style="left:4px;top:668px;width:6px;height:50px;background:repeating-linear-gradient(0deg,#3a3a3a 0 1px,#2a2a2a 1px 2px)"></div>
<svg class="a" style="left:3px;top:720px" width="9" height="24" viewBox="0 0 9 24"><path d="M1 1 L8 6 L1 11Z M8 13 L1 18 L8 23Z" fill="#555"/></svg>
<div class="a" style="left:4px;top:746px;width:6px;height:48px;background:repeating-linear-gradient(0deg,#3a3a3a 0 1px,#2a2a2a 1px 2px)"></div>
<!-- material sphere -->
<div class="a" style="left:22px;top:921px;width:86px;height:88px;border-radius:50%;background:radial-gradient(circle at 45% 35%,#b8b8b8 0,#888 20px,#4e4e4e 40px,#2a2a2a 46px)"></div>
<div class="a" style="left:62px;top:935px;width:8px;height:8px;border-radius:50%;background:#f7931e"></div>
<!-- FastShader -->
<div class="b" style="left:18px;top:1013px;width:92px;height:45px;background:#2e2f2f;box-shadow:0 0 0 1px #161616"></div>
<div class="a" style="left:19px;top:1014px;width:90px;height:26px;background:#393a3a"></div>
<div class="a" style="left:48px;top:1013px;width:32px;height:32px;border-radius:50%;background:radial-gradient(circle at 50% 40%,#e0e0e0 0,#a0a0a0 9px,#4a4a4a 16px)"></div>
<div class="t" style="left:18px;top:1043px;width:92px;text-align:center;color:#c8c8c8">FastShader</div>
<div class="a" style="left:18px;top:1062px;width:92px;height:44px;background:#282828;border-radius:3px"></div>
<div class="a" style="left:49px;top:1062px;width:30px;height:30px;border-radius:50%;background:radial-gradient(circle at 50% 40%,#9a9a9a 0,#6a6a6a 8px,#333 15px)"></div>
<div class="t" style="left:14px;top:1091px;width:100px;text-align:center;color:#c0c0c0">BasicMaterialB</div>
<div class="a" style="left:18px;top:1110px;width:92px;height:44px;background:#282828;border-radius:3px"></div>
<svg class="a" style="left:46px;top:1111px" width="34" height="28" viewBox="0 0 34 28"><path d="M8 4 Q14 1 18 4 Q24 2 28 3 Q32 8 28 14 Q22 15 18 20 Q14 26 6 25 Q3 20 5 14 Q4 7 8 4Z" fill="none" stroke="#bbb" stroke-width="1.5" stroke-dasharray="2 1.5"/></svg>
<div class="t" style="left:14px;top:1139px;width:100px;text-align:center;color:#c0c0c0">SelectLasso</div>
<div class="a" style="left:18px;top:1158px;width:92px;height:44px;background:#282828;border-radius:3px"></div>
<div class="a" style="left:51px;top:1161px;width:26px;height:25px;border:1.5px dotted #bbb"></div>
<div class="t" style="left:14px;top:1187px;width:100px;text-align:center;color:#c0c0c0">SelectRect</div>
<div class="a" style="left:18px;top:1206px;width:92px;height:44px;background:#282828;border-radius:3px"></div>
<div class="a" style="left:47px;top:1208px;width:35px;height:36px;border-radius:45% 40% 10% 40%;background:radial-gradient(circle at 60% 40%,#ddd,#999)"></div>
<svg class="a" style="left:46px;top:1207px" width="22" height="30" viewBox="0 0 22 30"><path d="M10 2 Q3 6 4 14 Q10 14 7 22 Q8 28 14 26 Q18 18 12 14 Q18 8 10 2Z" fill="#6a6a6a" stroke="#444" stroke-width="1"/></svg>
<div class="t" style="left:14px;top:1235px;width:100px;text-align:center;color:#c0c0c0">MaskLasso</div>
<div class="a" style="left:18px;top:1254px;width:92px;height:44px;background:#282828;border-radius:3px"></div>
<div class="a" style="left:47px;top:1256px;width:35px;height:36px;border-radius:45% 40% 10% 40%;background:radial-gradient(circle at 60% 40%,#ddd,#999)"></div>
<svg class="a" style="left:44px;top:1255px" width="34" height="26" viewBox="0 0 34 26"><path d="M4 8 Q6 2 14 4 Q22 2 26 8 Q32 12 24 16 Q20 24 14 20 Q8 24 6 18 Q2 14 4 8Z" fill="#6a6a6a" stroke="#444" stroke-width="1"/></svg>
<div class="t" style="left:14px;top:1283px;width:100px;text-align:center;color:#c0c0c0">MaskPen</div>
<div class="a" style="left:18px;top:1302px;width:92px;height:44px;background:#282828;border-radius:3px"></div>
<div class="a" style="left:47px;top:1302px;width:34px;height:34px;border-radius:50%;background:radial-gradient(circle at 45% 35%,#d8d8d8 0,#a0a0a0 10px,#555 17px)"></div>
<div class="t" style="left:14px;top:1331px;width:100px;text-align:center;color:#c0c0c0">Smooth</div>
<div class="a" style="left:18px;top:1350px;width:92px;height:44px;background:#282828;border-radius:3px"></div>
<div class="a" style="left:46px;top:1349px;width:36px;height:36px;border-radius:50%;background:radial-gradient(circle at 45% 35%,#e8e8e8 0,#b8b8b8 10px,#707070 18px)"></div>
<div class="t" style="left:10px;top:1379px;width:108px;text-align:center;color:#c0c0c0">SmoothValleys</div>

<!-- canvas vertical toolbar -->
<div class="a" style="left:162px;top:852px;width:34px;height:34px;border-radius:50%;background:#000"></div>
<svg class="a" style="left:162px;top:852px" width="34" height="34" viewBox="0 0 34 34"><path d="M11 8 L23 8 L25 17 Q22 22 19 26 L15 26 Q12 22 9 17Z" fill="#fff"/><circle cx="17" cy="16" r="2.5" fill="#000"/><path d="M17 18 v8" stroke="#000" stroke-width="1.5"/></svg>
<div class="a" style="left:162px;top:893px;width:34px;height:439px;background:#f6f6f8"></div>
<div class="a" style="left:164px;top:895px;width:30px;height:30px;background:#2aa3dc"></div>
<svg class="a" style="left:164px;top:895px" width="30" height="30" viewBox="0 0 30 30"><path d="M3 15 Q15 4 27 15 Q15 26 3 15Z" fill="#fff" stroke="#111" stroke-width="1.5"/><circle cx="15" cy="15" r="5" fill="#111"/></svg>
<svg class="a" style="left:164px;top:927px" width="30" height="30" viewBox="0 0 30 30"><path d="M4 3 L24 9 L16 13 L24 21 L21 24 L13 16 L9 24 Z" fill="#fff" stroke="#222" stroke-width="1.6" stroke-linejoin="round"/><path d="M25 25 L30 25 L30 20Z" fill="#222"/></svg>
<svg class="a" style="left:164px;top:957px" width="30" height="30" viewBox="0 0 30 30"><circle cx="15" cy="16" r="8" fill="none" stroke="#333" stroke-width="1.6"/><path d="M13 6 h4 M15 6 v2 M22 8 l2 -2" stroke="#333" stroke-width="1.6"/><path d="M5 25 L26 5" stroke="#333" stroke-width="1.6"/><path d="M25 28 L30 28 L30 23Z" fill="#222"/></svg>
<div class="a" style="left:164px;top:985px;width:30px;height:30px;background:#2aa3dc"></div>
<svg class="a" style="left:164px;top:985px" width="30" height="30" viewBox="0 0 30 30"><path d="M6 8 L12 4 L26 18 L20 24Z" fill="#fff" stroke="#111" stroke-width="1.8" stroke-linejoin="round"/><path d="M9 9 L13 6 L20 13 L16 17Z" fill="#ccc" stroke="#111" stroke-width="1.2"/><path d="M25 30 L30 30 L30 25Z" fill="#111"/></svg>
<svg class="a" style="left:164px;top:1017px" width="30" height="30" viewBox="0 0 30 30"><path d="M5 5 L23 23" stroke="#333" stroke-width="4" stroke-linecap="round"/><path d="M5 5 L23 23" stroke="#fff" stroke-width="1.6" stroke-linecap="round"/><path d="M25 28 L30 28 L30 23Z" fill="#222"/></svg>
<svg class="a" style="left:164px;top:1046px" width="30" height="30" viewBox="0 0 30 30"><path d="M4 12 L12 4 L26 18 L18 26Z" fill="#ddd" stroke="#333" stroke-width="1.6" stroke-linejoin="round"/><path d="M8 8 L12 4 L16 8 L12 12Z" fill="#fff" stroke="#333" stroke-width="1.2"/></svg>
<div class="a" style="left:174px;top:1085px;width:10px;height:10px;border-radius:50%;background:#222"></div>
<svg class="a" style="left:164px;top:1107px" width="30" height="26" viewBox="0 0 30 26"><path d="M6 9 L13 3 L13 7 Q25 7 24 16 Q23 23 15 22 L16 18 Q20 18 20 15 Q20 11 13 11 L13 15Z" fill="#fff" stroke="#333" stroke-width="1.6" stroke-linejoin="round"/></svg>
<svg class="a" style="left:164px;top:1137px" width="30" height="26" viewBox="0 0 30 26"><path d="M7 6 h16 M12 6 v-3 h6 v3 M8 8 h14 l-1 16 h-12z" fill="#eee" stroke="#333" stroke-width="1.6"/><path d="M12 10 v12 M18 10 v12" stroke="#333" stroke-width="1.2"/></svg>
<svg class="a" style="left:164px;top:1166px" width="30" height="30" viewBox="0 0 30 30"><rect x="5" y="5" width="19" height="14" fill="#ddd" stroke="#333" stroke-width="1.6"/><path d="M12 5 v-2 h5 v2 M9 19 l-2 5 M20 19 l2 5" stroke="#333" stroke-width="1.6"/><path d="M25 29 L30 29 L30 24Z" fill="#222"/></svg>
<svg class="a" style="left:164px;top:1199px" width="30" height="24" viewBox="0 0 30 24"><path d="M4 7 h7 l2 -3 h5 l2 3 h6 v14 h-22z" fill="#fff" stroke="#333" stroke-width="1.6"/><circle cx="14" cy="14" r="5" fill="#fff" stroke="#333" stroke-width="1.6"/><circle cx="14" cy="14" r="2.5" fill="#333"/><circle cx="22" cy="10" r="1.3" fill="none" stroke="#333"/></svg>
<svg class="a" style="left:164px;top:1227px" width="30" height="26" viewBox="0 0 30 26"><path d="M7 6 h16 v18 h-16z" fill="#fff" stroke="#333" stroke-width="1.6"/><path d="M11 6 Q15 1 19 6" fill="#ccc" stroke="#333" stroke-width="1.4"/><path d="M10 11 h10 M10 15 h10 M10 19 h10" stroke="#333" stroke-width="1.4"/></svg>
<div class="a" style="left:164px;top:1255px;width:15px;height:14px;background:#1e9ff0"></div>
<div class="a" style="left:179px;top:1255px;width:15px;height:14px;background:#f8e000"></div>
<div class="a" style="left:164px;top:1269px;width:15px;height:15px;background:#f02c8c"></div>
<div class="a" style="left:179px;top:1269px;width:15px;height:15px;background:#0ad818"></div>
<div class="a" style="left:179px;top:1284px;width:15px;height:15px;background:#000"></div>
<div class="a" style="left:164px;top:1300px;width:30px;height:30px;background:#08dc18"></div>

<!-- ===== RIGHT TRAY ===== -->
<div class="a" style="left:2334px;top:24px;width:201px;height:1416px;background:#2d2e2e;border-left:2px solid #161616;border-right:1px solid #1a1a1a"></div>
<div class="a" style="left:2535px;top:24px;width:25px;height:1416px;background:#262626"></div>
<div class="bd" style="left:2340px;top:26px;width:92px;height:20px;background:#3a3a3a;box-shadow:0 0 0 1px #202020"></div><div class="t" style="left:2344px;top:28px;color:#d6d6d6">Copy Tool</div>
<div class="bd" style="left:2436px;top:26px;width:92px;height:20px;background:#303131;box-shadow:0 0 0 1px #202020"></div><div class="t" style="left:2440px;top:28px;color:#6a6a6a">Paste Tool</div>
<div class="bd" style="left:2340px;top:50px;width:92px;height:20px;background:#3a3a3a;box-shadow:0 0 0 1px #202020"></div><div class="t" style="left:2344px;top:52px;color:#d6d6d6">Import</div>
<div class="bd" style="left:2436px;top:50px;width:92px;height:20px;background:#3a3a3a;box-shadow:0 0 0 1px #202020"></div><div class="t" style="left:2440px;top:52px;color:#d6d6d6">Export</div>
<div class="bd" style="left:2340px;top:74px;width:44px;height:20px;background:#3a3a3a;box-shadow:0 0 0 1px #202020"></div><div class="t" style="left:2344px;top:76px;color:#d6d6d6">Clone</div>
<div class="bd" style="left:2388px;top:74px;width:140px;height:20px;background:#3a3a3a;box-shadow:0 0 0 1px #202020"></div><div class="t" style="left:2392px;top:76px;color:#d6d6d6">Make PolyMesh3D</div>
<div class="bd" style="left:2340px;top:98px;width:44px;height:20px;background:#3a3a3a;box-shadow:0 0 0 1px #202020"></div><div class="t" style="left:2344px;top:100px;color:#d6d6d6">GoZ</div>
<div class="bd" style="left:2388px;top:98px;width:44px;height:20px;background:#3a3a3a;box-shadow:0 0 0 1px #202020"></div><div class="t" style="left:2392px;top:100px;color:#d6d6d6">All</div>
<div class="bd" style="left:2436px;top:98px;width:68px;height:20px;background:#3a3a3a;box-shadow:0 0 0 1px #202020"></div><div class="t" style="left:2440px;top:100px;color:#d6d6d6">Visible</div>
<div class="bd" style="left:2508px;top:98px;width:20px;height:20px;background:#3a3a3a;box-shadow:0 0 0 1px #202020"></div><div class="t" style="left:2512px;top:100px;color:#d6d6d6">R</div>
<div class="bd" style="left:2340px;top:122px;width:188px;height:20px;background:#3a3a3a;box-shadow:0 0 0 1px #202020"></div><div class="t" style="left:2344px;top:124px;color:#d6d6d6">Lightbox<span style="display:inline-block;width:0;height:0;border-left:11px solid #d6d6d6;border-top:6.5px solid transparent;border-bottom:6.5px solid transparent;vertical-align:-1px;margin:0 1px"></span>Tools</div>
<div class="t" style="left:2344px;top:146px;color:#d6d6d6">Cylinder3D_1. 33</div>
<div class="sl" style="left:2344px;top:163px;width:156px;background:#666"></div><div class="knob" style="left:2431px;top:160px"></div>
<div class="bd" style="left:2508px;top:146px;width:20px;height:20px;background:#333;box-shadow:0 0 0 1px #202020"></div><div class="t" style="left:2512px;top:148px;color:#d6d6d6">R</div>
<div class="a" style="left:2340px;top:170px;width:92px;height:92px;background:#333434;border-radius:3px;box-shadow:0 0 0 1px #1a1a1a"></div>
<div class="a" style="left:2340px;top:245px;width:92px;height:17px;background:#2b2b2b;border-radius:0 0 3px 3px"></div>
<svg class="a" style="left:2340px;top:170px" width="92" height="75" viewBox="0 0 92 75"><ellipse cx="46" cy="36" rx="43" ry="12" transform="rotate(-47 46 36)" fill="#f0f0f0"/></svg>
<div class="t" style="left:2340px;top:246px;width:92px;text-align:center;color:#c8c8c8">Cylinder3D_1</div>
<div class="a" style="left:2436px;top:170px;width:92px;height:46px;background:#2d2e2e"></div>
<svg class="a" style="left:2472px;top:168px" width="20" height="40" viewBox="0 0 20 40"><g fill="#e8e8e8"><circle cx="10" cy="3" r="2.2"/><path d="M7 6 h6 l4 12 l-1 1 l-3 -8 v10 l-1 18 h-2 l0 -16 l0 16 h-2 l-1 -18 v-10 l-3 8 l-1 -1z"/></g></svg>
<div class="t" style="left:2515px;top:173px;color:#e0e0e0">2</div>
<div class="t" style="left:2436px;top:199px;color:#d0d0d0;font-size:12px">J Anatomy Step-1</div>
<div class="a" style="left:2436px;top:218px;width:92px;height:44px;background:#2d2e2e"></div>
<svg class="a" style="left:2464px;top:216px" width="36" height="30" viewBox="0 0 36 30"><ellipse cx="20" cy="18" rx="11" ry="9" fill="#2a3a9a"/><ellipse cx="16" cy="12" rx="9" ry="8" fill="#4050c0"/><ellipse cx="12" cy="7" rx="6" ry="5" fill="#8090e0"/><ellipse cx="11" cy="5" rx="3" ry="3" fill="#d8e0ff"/></svg>
<div class="t" style="left:2436px;top:247px;width:92px;text-align:center;color:#d0d0d0">AlphaBrush</div>
<div class="a" style="left:2340px;top:266px;width:92px;height:44px;background:#2d2e2e"></div>
<svg class="a" style="left:2370px;top:265px" width="32" height="30" viewBox="0 0 32 30"><path d="M22 5 Q14 0 9 6 Q6 12 15 15 Q22 18 18 23 Q12 27 6 22" fill="none" stroke="#e08a10" stroke-width="6" stroke-linecap="round"/><path d="M20 5 Q14 2 10 6" fill="none" stroke="#ffd060" stroke-width="2"/></svg>
<div class="t" style="left:2340px;top:295px;width:92px;text-align:center;color:#d0d0d0">SimpleBrush</div>
<div class="a" style="left:2436px;top:266px;width:92px;height:44px;background:#2d2e2e"></div>
<svg class="a" style="left:2466px;top:264px" width="34" height="32" viewBox="0 0 34 32"><path d="M6 22 Q0 8 14 3 Q28 0 31 14 Q32 24 24 28 Q20 24 18 28 Q14 26 12 22 Q10 20 8 24 Z" fill="#a0501a"/><path d="M10 18 Q10 8 18 8 Q26 10 24 20 Q20 16 16 20 Z" fill="#2d2e2e"/><path d="M10 8 Q16 3 24 6" fill="none" stroke="#e0a070" stroke-width="2"/></svg>
<div class="t" style="left:2436px;top:295px;width:92px;text-align:center;color:#d0d0d0">EraserBrush</div>
<div class="a" style="left:2340px;top:314px;width:92px;height:44px;background:#333434;border-radius:3px;box-shadow:0 0 0 1px #1a1a1a"></div>
<div class="a" style="left:2340px;top:341px;width:92px;height:17px;background:#2b2b2b"></div>
<svg class="a" style="left:2340px;top:314px" width="92" height="34" viewBox="0 0 92 34"><ellipse cx="46" cy="16" rx="17" ry="6" transform="rotate(-47 46 16)" fill="#eeeeee"/></svg>
<div class="t" style="left:2340px;top:342px;width:92px;text-align:center;color:#d0d0d0">Cylinder3D_1</div>
<div class="a" style="left:2334px;top:366px;width:201px;height:8px;background:#262626"></div>
<div class="a" style="left:2334px;top:360px;width:201px;height:6px;border:1px solid #161616;border-top:none;border-radius:0 0 8px 8px;background:#2d2e2e"></div>
<div class="a" style="left:2334px;top:373px;width:201px;height:10px;border:1px solid #1c1c1c;border-bottom:none;border-radius:9px 9px 0 0;background:#2d2e2e"></div>
<div class="t" style="left:2348px;top:376px;color:#e8e8e8;font-size:12.5px">Subtool</div>
<div class="t" style="left:2343px;top:395px;color:#d0d0d0">Visible Count 14</div>
<div class="sl" style="left:2344px;top:412px;width:184px;background:#666"></div><div class="knob" style="left:2438px;top:409px"></div>
<div class="o" style="left:2340px;top:418px;width:20px;height:21px;border-radius:3px"></div><div class="t" style="left:2342px;top:421px;color:#5a1a00">V1</div>
<div class="bd" style="left:2364px;top:418px;width:21px;height:21px;background:#303131;box-shadow:0 0 0 1px #242424"></div><div class="t" style="left:2366px;top:421px;color:#d0d0d0">V2</div>
<div class="bd" style="left:2388px;top:418px;width:21px;height:21px;background:#303131;box-shadow:0 0 0 1px #242424"></div><div class="t" style="left:2390px;top:421px;color:#d0d0d0">V3</div>
<div class="bd" style="left:2412px;top:418px;width:21px;height:21px;background:#303131;box-shadow:0 0 0 1px #242424"></div><div class="t" style="left:2414px;top:421px;color:#d0d0d0">V4</div>
<div class="bd" style="left:2436px;top:418px;width:21px;height:21px;background:#303131;box-shadow:0 0 0 1px #242424"></div><div class="t" style="left:2438px;top:421px;color:#d0d0d0">V5</div>
<div class="bd" style="left:2460px;top:418px;width:21px;height:21px;background:#303131;box-shadow:0 0 0 1px #242424"></div><div class="t" style="left:2462px;top:421px;color:#d0d0d0">V6</div>
<div class="bd" style="left:2484px;top:418px;width:21px;height:21px;background:#303131;box-shadow:0 0 0 1px #242424"></div><div class="t" style="left:2486px;top:421px;color:#d0d0d0">V7</div>
<div class="bd" style="left:2508px;top:418px;width:21px;height:21px;background:#303131;box-shadow:0 0 0 1px #242424"></div><div class="t" style="left:2510px;top:421px;color:#d0d0d0">V8</div>
<div class="a" style="left:2357px;top:442px;width:173px;height:46px;background:#333434;border-radius:3px;box-shadow:0 0 0 1px #151515"></div>
<div class="a" style="left:2357px;top:472px;width:173px;height:16px;background:#282929;border-radius:0 0 3px 3px"></div>
<svg class="a" style="left:2358px;top:444px" width="36" height="30" viewBox="0 0 36 30"><ellipse cx="18" cy="15" rx="15" ry="6" transform="rotate(-40 18 15)" fill="#eee"/></svg>
<svg class="a" style="left:2404px;top:444px" width="124" height="16" viewBox="0 0 124 16"><path d="M6 5 h6 M9 5 v7 l-3 -3 M9 12 l3 -3" stroke="#777" stroke-width="1.5" fill="none"/><circle cx="25" cy="7" r="4" fill="#bbb"/><circle cx="31" cy="7" r="4" fill="#fff"/><circle cx="47" cy="7" r="4.5" fill="#555"/><circle cx="69" cy="7" r="4.5" fill="none" stroke="#555" stroke-width="1.5"/><path d="M86 12 L96 4" stroke="#555" stroke-width="2"/><path d="M103 6 Q113 -1 123 6" fill="none" stroke="#ddd" stroke-width="1.5"/><circle cx="113" cy="7" r="3.5" fill="#999" stroke="#ddd"/></svg>
<div class="t" style="left:2357px;top:473px;width:173px;text-align:center;color:#e0e0e0">Cylinder3D_1</div>
<div class="a" style="left:2350px;top:490px;width:183px;height:620px;background:#313232"></div><div class="a" style="left:2343px;top:444px;width:5px;height:664px;background:#8c5c2e;border-radius:2px"></div>
<div class="a" style="left:2362px;top:514px;width:2px;height:2px;background:#3e3e3e"></div>
<div class="a" style="left:2362px;top:562px;width:2px;height:2px;background:#3e3e3e"></div>
<div class="a" style="left:2362px;top:610px;width:2px;height:2px;background:#3e3e3e"></div>
<div class="a" style="left:2362px;top:658px;width:2px;height:2px;background:#3e3e3e"></div>
<div class="a" style="left:2362px;top:706px;width:2px;height:2px;background:#3e3e3e"></div>
<div class="a" style="left:2362px;top:754px;width:2px;height:2px;background:#3e3e3e"></div>
<div class="a" style="left:2362px;top:802px;width:2px;height:2px;background:#3e3e3e"></div>
<div class="a" style="left:2362px;top:850px;width:2px;height:2px;background:#3e3e3e"></div>
<div class="a" style="left:2362px;top:898px;width:2px;height:2px;background:#3e3e3e"></div>
<div class="bd" style="left:2340px;top:1115px;width:92px;height:19px;background:#303131;box-shadow:0 0 0 1px #202020"></div><div class="t" style="left:2344px;top:1117px;color:#6a6a6a">List All</div>
<div class="bd" style="left:2436px;top:1115px;width:44px;height:19px;background:#303131"></div><div class="bd" style="left:2484px;top:1115px;width:44px;height:19px;background:#303131"></div>
<svg class="a" style="left:2450px;top:1116px" width="70" height="18" viewBox="0 0 70 18"><path d="M7 2 L12 8 L9 8 L9 15 L5 15 L5 8 L2 8Z" fill="#666"/><path d="M55 16 L60 10 L57 10 L57 3 L53 3 L53 10 L50 10Z" fill="#666"/></svg>
<div class="bd" style="left:2340px;top:1139px;width:92px;height:20px;background:#3a3a3a;box-shadow:0 0 0 1px #202020"></div><div class="t" style="left:2344px;top:1141px;color:#d6d6d6">New Folder</div>
<div class="bd" style="left:2436px;top:1139px;width:44px;height:20px;background:#303131"></div><div class="bd" style="left:2484px;top:1139px;width:44px;height:20px;background:#303131"></div>
<svg class="a" style="left:2448px;top:1140px" width="70" height="18" viewBox="0 0 70 18"><path d="M4 16 Q4 6 12 6 L12 3 L17 8 L12 13 L12 10 Q8 10 8 16Z" fill="#666"/><path d="M50 2 L54 2 L54 10 L60 10 L60 6 L65 12 L60 17 L60 14 L50 14Z" fill="#666"/></svg>
<div class="bd" style="left:2340px;top:1187px;width:92px;height:20px;background:#3a3a3a;box-shadow:0 0 0 1px #202020"></div><div class="t" style="left:2344px;top:1189px;color:#d6d6d6">Rename</div>
<div class="bd" style="left:2436px;top:1187px;width:92px;height:20px;background:#303131;box-shadow:0 0 0 1px #202020"></div><div class="t" style="left:2440px;top:1189px;color:#6a6a6a">AutoReorder</div>
<div class="bd" style="left:2340px;top:1211px;width:92px;height:20px;background:#3a3a3a;box-shadow:0 0 0 1px #202020"></div><div class="t" style="left:2344px;top:1213px;color:#d6d6d6">All Low</div>
<div class="bd" style="left:2436px;top:1211px;width:92px;height:20px;background:#3a3a3a;box-shadow:0 0 0 1px #202020"></div><div class="t" style="left:2440px;top:1213px;color:#d6d6d6">All High</div>
<div class="bd" style="left:2340px;top:1235px;width:92px;height:20px;background:#3a3a3a;box-shadow:0 0 0 1px #202020"></div><div class="t" style="left:2344px;top:1237px;color:#d6d6d6">All To Home</div>
<div class="bd" style="left:2436px;top:1235px;width:92px;height:20px;background:#3a3a3a;box-shadow:0 0 0 1px #202020"></div><div class="t" style="left:2440px;top:1237px;color:#d6d6d6">All To Target</div>
<div class="bd" style="left:2340px;top:1259px;width:92px;height:20px;background:#3a3a3a;box-shadow:0 0 0 1px #202020"></div><div class="t" style="left:2344px;top:1261px;color:#d6d6d6">Copy</div>
<div class="bd" style="left:2436px;top:1259px;width:92px;height:20px;background:#303131;box-shadow:0 0 0 1px #202020"></div><div class="t" style="left:2440px;top:1261px;color:#6a6a6a">Paste</div>
<div class="bd" style="left:2340px;top:1283px;width:92px;height:44px;background:#3a3a3a;box-shadow:0 0 0 1px #202020"></div><div class="t" style="left:2344px;top:1297px;color:#d6d6d6">Duplicate</div>
<div class="bd" style="left:2436px;top:1283px;width:92px;height:20px;background:#3a3a3a;box-shadow:0 0 0 1px #202020"></div><div class="t" style="left:2440px;top:1285px;color:#d6d6d6">Append</div>
<div class="bd" style="left:2436px;top:1307px;width:92px;height:20px;background:#3a3a3a;box-shadow:0 0 0 1px #202020"></div><div class="t" style="left:2440px;top:1309px;color:#d6d6d6">Insert</div>
<div class="bd" style="left:2340px;top:1331px;width:92px;height:44px;background:#3a3a3a;box-shadow:0 0 0 1px #202020"></div><div class="t" style="left:2344px;top:1345px;color:#d6d6d6">Delete</div>
<div class="bd" style="left:2436px;top:1331px;width:92px;height:20px;background:#303131;box-shadow:0 0 0 1px #202020"></div><div class="t" style="left:2440px;top:1333px;color:#6a6a6a">Del Other</div>
<div class="bd" style="left:2436px;top:1355px;width:92px;height:20px;background:#3a3a3a;box-shadow:0 0 0 1px #202020"></div><div class="t" style="left:2440px;top:1357px;color:#d6d6d6">Del All</div>
<div class="a" style="left:2335px;top:1378px;width:199px;height:24px;background:#303131;border-top:1px solid #242424"></div><div class="t" style="left:2344px;top:1383px;color:#d8d8d8">Split</div>
<div class="a" style="left:2335px;top:1402px;width:199px;height:24px;background:#303131;border-top:1px solid #242424"></div><div class="t" style="left:2344px;top:1407px;color:#d8d8d8">Align</div>
<div class="a" style="left:2335px;top:1426px;width:199px;height:24px;background:#303131;border-top:1px solid #242424"></div><div class="t" style="left:2344px;top:1431px;color:#d8d8d8">Distribute</div>
<!-- right toolbar -->
<div class="bd" style="left:2198px;top:128px;width:44px;height:43px;background:#333434;box-shadow:0 0 0 1px #202020"></div>
<div class="a" style="left:2205px;top:134px;width:30px;height:30px;background:radial-gradient(circle at 35% 35%,#bbb 0,#777 10px,#444 16px,#3a3a3a 18px);border-radius:3px"></div>
<div class="t" style="left:2198px;top:153px;width:44px;text-align:center;font-size:9.5px;font-weight:bold;color:#ddd">BPR</div>
<div class="t" style="left:2201px;top:176px;color:#e0e0e0">SPix 3</div>
<div class="sl" style="left:2199px;top:193px;width:44px;background:#777"></div><div class="knob" style="left:2209px;top:190px"></div>
<div class="bd" style="left:2198px;top:200px;width:44px;height:43px;background:#303131;box-shadow:0 0 0 1px #202020"></div><svg class="a" style="left:2206px;top:205px" width="32" height="20" viewBox="0 0 32 20"><path d="M3 10 l2 -6 l2 5 l1 -7 l2 7 l1 -6 l2 7 l2 -4 l0 8 q-2 6 -8 6 q-4 0 -6 -10z" fill="#e8e8e8"/><rect x="18" y="3" width="13" height="13" fill="#444" stroke="#ddd"/><path d="M24.5 4 v11 M19 9.5 h11" stroke="#ddd"/></svg><div class="t" style="left:2198px;top:225px;width:44px;text-align:center;font-size:9.5px;color:#d8d8d8">Scroll</div>
<div class="bd" style="left:2198px;top:248px;width:44px;height:43px;background:#303131;box-shadow:0 0 0 1px #202020"></div><svg class="a" style="left:2204px;top:253px" width="34" height="22" viewBox="0 0 34 22"><circle cx="12" cy="8" r="6" fill="none" stroke="#e0e0e0" stroke-width="1.6"/><path d="M7 13 L2 19" stroke="#e0e0e0" stroke-width="2"/><rect x="17" y="4" width="15" height="12" fill="#444" stroke="#ddd" stroke-width="1"/><path d="M24.5 5 v10 M22 7 l2.5 -2.5 l2.5 2.5 M22 13 l2.5 2.5 l2.5 -2.5" stroke="#ddd" fill="none"/></svg><div class="t" style="left:2198px;top:273px;width:44px;text-align:center;font-size:9.5px;color:#d8d8d8">Zoom</div>
<div class="bd" style="left:2198px;top:296px;width:44px;height:43px;background:#303131;box-shadow:0 0 0 1px #202020"></div><svg class="a" style="left:2204px;top:301px" width="34" height="22" viewBox="0 0 34 22"><circle cx="12" cy="8" r="6" fill="none" stroke="#e0e0e0" stroke-width="1.6"/><path d="M7 13 L2 19" stroke="#e0e0e0" stroke-width="2"/><rect x="17" y="4" width="15" height="12" fill="#444" stroke="#ddd" stroke-width="1"/><text x="25" y="14" font-size="9" fill="#ddd" text-anchor="middle" font-family="Liberation Sans">x1</text></svg><div class="t" style="left:2198px;top:321px;width:44px;text-align:center;font-size:9.5px;color:#d8d8d8">Actual</div>
<div class="bd" style="left:2198px;top:344px;width:44px;height:43px;background:#303131;box-shadow:0 0 0 1px #202020"></div><svg class="a" style="left:2204px;top:349px" width="34" height="22" viewBox="0 0 34 22"><circle cx="12" cy="8" r="6" fill="none" stroke="#e0e0e0" stroke-width="1.6"/><path d="M7 13 L2 19" stroke="#e0e0e0" stroke-width="2"/><rect x="17" y="4" width="15" height="12" fill="#444" stroke="#ddd" stroke-width="1"/><rect x="24" y="4" width="8" height="7" fill="#bbb"/></svg><div class="t" style="left:2198px;top:369px;width:44px;text-align:center;font-size:9.5px;color:#d8d8d8">AAHalf</div>
<div class="bd" style="left:2198px;top:392px;width:44px;height:43px;background:#2c2c2c"></div><div class="t" style="left:2198px;top:391px;width:44px;text-align:center;font-size:8.5px;font-weight:bold;color:#ddd">Dynamic</div><svg class="a" style="left:2204px;top:402px" width="32" height="14" viewBox="0 0 32 14"><path d="M4 1 h24 M2 5 h28 M1 9 h30 M0 13 h32 M10 1 l-4 12 M22 1 l4 12 M16 1 v12" stroke="#ddd" stroke-width="1"/></svg><div class="t" style="left:2198px;top:416px;width:44px;text-align:center;font-size:9.5px;color:#ddd">Persp</div>
<div class="bd" style="left:2198px;top:440px;width:44px;height:43px;background:#2c2c2c"></div><svg class="a" style="left:2205px;top:443px" width="32" height="30" viewBox="0 0 32 30"><text x="22" y="7" font-size="7" fill="#777" font-family="Liberation Sans">x y z</text><path d="M16 12 v6 M13 15 l3 3 l3 -3" stroke="#ddd" stroke-width="2" fill="none"/><rect x="2" y="20" width="28" height="2" fill="#ddd"/></svg><div class="t" style="left:2198px;top:464px;width:44px;text-align:center;font-size:9.5px;color:#ddd">Floor</div>
<div class="bd" style="left:2198px;top:488px;width:44px;height:43px;background:#2c2c2c"></div><svg class="a" style="left:2205px;top:500px" width="32" height="14" viewBox="0 0 32 14"><path d="M2 7 h28 M16 1 v12" stroke="#ddd" stroke-width="1" stroke-dasharray="2 1"/><path d="M4 5 l5 -4 v8z M28 5 l-5 -4 v8z" fill="#ddd"/></svg><div class="t" style="left:2198px;top:512px;width:44px;text-align:center;font-size:9.5px;color:#ddd">L.Sym</div>
<div class="bd" style="left:2198px;top:536px;width:44px;height:43px;background:#2c2c2c"></div><svg class="a" style="left:2205px;top:544px" width="32" height="26" viewBox="0 0 32 26"><circle cx="9" cy="14" r="4" fill="none" stroke="#999" stroke-width="1.5"/><rect x="4" y="17" width="16" height="6" fill="#888"/><rect x="16" y="7" width="12" height="9" fill="#aaa"/><path d="M18 7 v-3 q4 -4 8 0 v3" stroke="#aaa" fill="none" stroke-width="1.5"/></svg>
<div class="o" style="left:2198px;top:584px;width:44px;height:20px;border-radius:3px"></div><svg class="a" style="left:2206px;top:586px" width="32" height="16" viewBox="0 0 32 16"><path d="M10 4 A5 5 0 1 0 10 12" fill="none" stroke="#2a1000" stroke-width="1.5"/><text x="8" y="13" font-size="9" fill="#2a1000" font-family="Liberation Sans">XYZ</text></svg>
<svg class="a" style="left:2209px;top:610px" width="20" height="16" viewBox="0 0 20 16"><path d="M10 3 A5 5 0 1 0 8 12" fill="none" stroke="#ddd" stroke-width="1.3"/><text x="9" y="14" font-size="8" fill="#ddd" font-family="Liberation Sans">Y</text></svg>
<svg class="a" style="left:2215px;top:632px" width="20" height="16" viewBox="0 0 20 16"><path d="M10 3 A5 5 0 1 0 8 12" fill="none" stroke="#ddd" stroke-width="1.3"/><text x="9" y="14" font-size="8" fill="#ddd" font-family="Liberation Sans">Z</text></svg>
<div class="bd" style="left:2198px;top:656px;width:44px;height:43px;background:#333434;box-shadow:0 0 0 1px #202020"></div><svg class="a" style="left:2208px;top:663px" width="24" height="16" viewBox="0 0 24 16"><path d="M2 5 v-4 h4 M22 5 v-4 h-4 M2 11 v4 h4 M22 11 v4 h-4" stroke="#ddd" fill="none"/><circle cx="12" cy="8" r="3" fill="#bbb"/></svg><div class="t" style="left:2198px;top:681px;width:44px;text-align:center;font-size:9.5px;color:#d8d8d8">Frame</div>
<div class="bd" style="left:2198px;top:704px;width:44px;height:43px;background:#333434;box-shadow:0 0 0 1px #202020"></div><svg class="a" style="left:2206px;top:708px" width="32" height="20" viewBox="0 0 32 20"><circle cx="22" cy="9" r="6" fill="#888"/><path d="M3 10 l2 -6 l2 5 l1 -7 l2 7 l1 -6 l2 7 l2 -4 l0 8 q-2 6 -8 6 q-4 0 -6 -10z" fill="#e8e8e8"/></svg><div class="t" style="left:2198px;top:729px;width:44px;text-align:center;font-size:9.5px;color:#d8d8d8">Move</div>
<div class="bd" style="left:2198px;top:752px;width:44px;height:43px;background:#333434;box-shadow:0 0 0 1px #202020"></div><svg class="a" style="left:2206px;top:756px" width="32" height="22" viewBox="0 0 32 22"><circle cx="22" cy="9" r="6" fill="#888"/><circle cx="12" cy="9" r="6" fill="none" stroke="#ddd" stroke-width="1.5"/><path d="M7 14 L2 20" stroke="#ddd" stroke-width="2"/></svg><div class="t" style="left:2198px;top:777px;width:44px;text-align:center;font-size:9.5px;color:#d8d8d8">Zoom3D</div>
<div class="bd" style="left:2198px;top:800px;width:44px;height:43px;background:#333434;box-shadow:0 0 0 1px #202020"></div><svg class="a" style="left:2208px;top:804px" width="28" height="22" viewBox="0 0 28 22"><circle cx="14" cy="12" r="6" fill="#888"/><path d="M6 12 A8 8 0 1 1 20 18" fill="none" stroke="#ddd" stroke-width="1.5"/></svg><div class="t" style="left:2198px;top:825px;width:44px;text-align:center;font-size:9.5px;color:#d8d8d8">Rotate</div>
<div class="bd" style="left:2198px;top:848px;width:44px;height:43px;background:#2c2c2c"></div><div class="t" style="left:2198px;top:846px;width:44px;text-align:center;font-size:8.5px;font-weight:bold;color:#ddd">Line Fill</div><svg class="a" style="left:2207px;top:858px" width="26" height="16" viewBox="0 0 26 16"><rect x="1" y="1" width="24" height="14" fill="none" stroke="#ddd"/><path d="M1 5.5 h24 M1 10 h24 M7 1 v14 M13 1 v14 M19 1 v14" stroke="#ddd" stroke-width="0.8"/></svg><div class="t" style="left:2198px;top:872px;width:44px;text-align:center;font-size:9.5px;color:#ddd">PolyF</div>
<div class="bd" style="left:2198px;top:896px;width:44px;height:43px;background:#2c2c2c;box-shadow:0 0 0 1px #202020"></div><svg class="a" style="left:2208px;top:902px" width="26" height="20" viewBox="0 0 26 20"><rect x="10" y="2" width="14" height="11" fill="none" stroke="#aaa"/><circle cx="10" cy="13" r="6" fill="#999"/></svg><div class="t" style="left:2198px;top:921px;width:44px;text-align:center;font-size:9.5px;color:#d8d8d8">Transp</div>
<div class="bd" style="left:2198px;top:944px;width:44px;height:44px;background:#7e5426"></div><svg class="a" style="left:2208px;top:950px" width="24" height="20" viewBox="0 0 24 20"><circle cx="12" cy="11" r="7" fill="#6a4520"/><path d="M4 18 L20 2" stroke="#5a3510" stroke-width="1.5"/></svg><div class="t" style="left:2198px;top:969px;width:44px;text-align:center;font-size:9.5px;color:#5a3a18">Ghost</div>
<div class="o" style="left:2198px;top:992px;width:44px;height:44px;border-radius:3px"></div><div class="t" style="left:2198px;top:990px;width:44px;text-align:center;font-size:8.5px;font-weight:bold;color:#ffb060">Dynamic</div><svg class="a" style="left:2206px;top:1002px" width="28" height="18" viewBox="0 0 28 18"><circle cx="8" cy="11" r="6" fill="#c06a10"/><circle cx="20" cy="11" r="6" fill="#c06a10"/><circle cx="14" cy="8" r="6" fill="#000"/></svg><div class="t" style="left:2198px;top:1017px;width:44px;text-align:center;font-size:9.5px;color:#2a1000">Solo</div>
<div class="bd" style="left:2198px;top:1040px;width:44px;height:43px;background:#303131;box-shadow:0 0 0 1px #202020"></div><svg class="a" style="left:2206px;top:1046px" width="28" height="20" viewBox="0 0 28 20"><path d="M4 5 v-4 h4 M24 5 v-4 h-4 M4 15 v4 h4 M24 15 v4 h-4 M1 10 h6 M27 10 h-6" stroke="#ddd" fill="none"/><circle cx="14" cy="10" r="1.5" fill="#ddd"/></svg><div class="t" style="left:2198px;top:1065px;width:44px;text-align:center;font-size:9.5px;color:#d8d8d8">Xpose</div>
<div class="a" style="left:2197px;top:1087px;width:94px;height:94px;background:#333434;border:1px solid #161616;border-radius:3px"></div><div class="a" style="left:2198px;top:1160px;width:92px;height:20px;background:#2a2b2b"></div><div class="t" style="left:2274px;top:1126px;color:#d8d8d8;width:16px;overflow:hidden">Tex</div>
<div class="t" style="left:2203px;top:1186px;color:#6a6a6a">Texture On</div>
<div class="t" style="left:2201px;top:1352px;color:#6a6a6a">Split Screen</div><div class="sl" style="left:2198px;top:1369px;width:90px;background:#444"></div><div class="knob" style="left:2198px;top:1366px;background:#8a5a2a;width:16px"></div>
<div class="a" style="left:2299px;top:668px;width:6px;height:50px;background:repeating-linear-gradient(0deg,#3a3a3a 0 1px,#2a2a2a 1px 2px)"></div><svg class="a" style="left:2298px;top:720px" width="9" height="24" viewBox="0 0 9 24"><path d="M1 1 L8 6 L1 11Z M8 13 L1 18 L8 23Z" fill="#555"/></svg><div class="a" style="left:2299px;top:746px;width:6px;height:48px;background:repeating-linear-gradient(0deg,#3a3a3a 0 1px,#2a2a2a 1px 2px)"></div>

<!-- ===== BOTTOM TRAY ===== -->
<div class="bd" style="left:116px;top:1350px;width:91px;height:20px;background:#383838;box-shadow:0 0 0 1px #202020"></div><div class="t" style="left:119px;top:1352px">Import</div>
<div class="t" style="left:215px;top:1350px">MidValue 0</div><div class="sl" style="left:212px;top:1367px;width:92px"></div><div class="knob" style="left:212px;top:1364px"></div>
<div class="bd" style="left:307px;top:1350px;width:93px;height:20px;background:#2c2c2c"></div><div class="t" style="left:311px;top:1352px">Surface</div>
<div class="o" style="left:430px;top:1350px;width:188px;height:20px;border-radius:3px;border:1px solid #3a1a00"></div><div class="t" style="left:433px;top:1352px;color:#4a1500">Auto Mask FiberMesh</div>
<div class="t" style="left:625px;top:1350px;color:#6a6a6a">LazyStep</div><div class="sl" style="left:622px;top:1367px;width:90px;background:#444"></div><div class="knob" style="left:634px;top:1364px;background:#8a5a2a"></div>
<div class="t" style="left:721px;top:1350px;color:#6a6a6a">LazyRadius</div><div class="sl" style="left:718px;top:1367px;width:90px;background:#444"></div><div class="knob" style="left:746px;top:1364px;background:#8a5a2a"></div>
<div class="bd" style="left:814px;top:1350px;width:91px;height:20px;background:#2a2a2a"></div><div class="t" style="left:817px;top:1352px;color:#6a6a6a">Split Hidden</div>
<div class="a" style="left:1090px;top:1379px;width:50px;height:6px;background:repeating-linear-gradient(90deg,#777 0 1px,#444 1px 2px)"></div>
<svg class="a" style="left:1142px;top:1377px" width="24" height="10" viewBox="0 0 24 10"><path d="M1 9 L6 2 L11 9Z M13 2 L23 2 L18 9Z" fill="#bbb"/></svg>
<div class="a" style="left:1168px;top:1379px;width:50px;height:6px;background:repeating-linear-gradient(90deg,#777 0 1px,#444 1px 2px)"></div>
<div class="bd" style="left:116px;top:1392px;width:91px;height:20px;background:#2c2c2c"></div><div class="t" style="left:119px;top:1394px;color:#6a6a6a">ProjectAll</div>
<div class="t" style="left:215px;top:1392px">Dist 0.02</div><div class="sl" style="left:212px;top:1409px;width:92px"></div><div class="knob" style="left:241px;top:1406px"></div>
<div class="bd" style="left:332px;top:1392px;width:91px;height:20px;background:#2e2e2e"></div><div class="t" style="left:335px;top:1394px">BackfaceMask</div>
<div class="bd" style="left:488px;top:1392px;width:90px;height:20px;background:#2a2a2a"></div><div class="t" style="left:491px;top:1394px;color:#6a6a6a">Delete</div>
<div class="t" style="left:623px;top:1392px;color:#6a6a6a">Split Screen</div><div class="sl" style="left:620px;top:1409px;width:90px;background:#444"></div><div class="knob" style="left:620px;top:1406px;background:#8a5a2a;width:16px"></div>
<div class="bd" style="left:907px;top:1392px;width:140px;height:20px;background:#2e2e2e;box-shadow:0 0 0 1px #222"></div><div class="t" style="left:910px;top:1394px">Colorize</div>
<div class="bd" style="left:1187px;top:1392px;width:91px;height:20px;background:#2a2a2a"></div><div class="t" style="left:1190px;top:1394px;color:#6a6a6a">Delete</div>
<div class="o" style="left:116px;top:1416px;width:91px;height:20px;border-radius:3px;border:1px solid #3a1a00"></div><div class="t" style="left:119px;top:1418px;color:#4a1500">Geometry</div>
<div class="o" style="left:211px;top:1416px;width:92px;height:20px;border-radius:3px;border:1px solid #3a1a00"></div><div class="t" style="left:214px;top:1418px;color:#4a1500">Color</div>
<div class="t" style="left:335px;top:1416px;width:90px;overflow:hidden">Min Connected F</div><div class="sl" style="left:332px;top:1433px;width:92px"></div><div class="knob" style="left:342px;top:1430px"></div>
<div class="bd" style="left:811px;top:1416px;width:92px;height:20px;background:#383838;box-shadow:0 0 0 1px #202020"></div><div class="t" style="left:814px;top:1418px">StoreMT</div>
<div class="bd" style="left:907px;top:1416px;width:91px;height:20px;background:#2a2a2a"></div><div class="t" style="left:910px;top:1418px;color:#6a6a6a">DelMT</div>
<div class="bd" style="left:1091px;top:1416px;width:92px;height:20px;background:#2e2e2e;box-shadow:0 0 0 1px #222"></div><div class="t" style="left:1094px;top:1418px">Double</div>
<div class="bd" style="left:1187px;top:1416px;width:91px;height:20px;background:#383838;box-shadow:0 0 0 1px #202020"></div><div class="t" style="left:1190px;top:1418px">Flip</div>
<div class="t" style="left:1793px;top:1350px">Polish By Features</div><div class="sl" style="left:1790px;top:1367px;width:182px"></div><div class="knob" style="left:1790px;top:1364px"></div>
<div class="a" style="left:1968px;top:1352px;width:8px;height:8px;border-radius:50%;background:#ccc;box-shadow:0 0 0 2px #3a3a3a"></div>
<div class="t" style="left:1985px;top:1350px">Polish By Groups</div><div class="sl" style="left:1982px;top:1367px;width:182px"></div><div class="knob" style="left:1982px;top:1364px"></div>
<div class="a" style="left:2160px;top:1352px;width:8px;height:8px;border-radius:50%;background:#ccc;box-shadow:0 0 0 2px #3a3a3a"></div>
<div class="bd" style="left:1701px;top:1392px;width:188px;height:20px;background:#353535;box-shadow:0 0 0 1px #202020"></div><div class="t" style="left:1704px;top:1394px">Unify</div><div class="t" style="left:1862px;top:1389px;font-size:8px;font-weight:bold;color:#ddd">x y z</div>
<div class="bd" style="left:1701px;top:1416px;width:188px;height:20px;background:#353535;box-shadow:0 0 0 1px #202020"></div><div class="t" style="left:1704px;top:1418px">Mirror</div><div class="t" style="left:1862px;top:1413px;font-size:8px;font-weight:bold;color:#ddd">x <span style="color:#555">y z</span></div>
<div class="t" style="left:1896px;top:1392px">Inflate</div><div class="sl" style="left:1896px;top:1409px;width:184px"></div><div class="knob" style="left:1980px;top:1406px"></div><div class="t" style="left:2054px;top:1389px;font-size:8px;font-weight:bold;color:#ddd">x y z</div>

<svg class="a" style="left:0;top:0" width="2560" height="1440" viewBox="0 0 2560 1440"><g fill="none" stroke="#2bd03b" stroke-linecap="round" stroke-linejoin="round">
<path d="M1440.4,257.0 C1442.8,257.7 1451.4,258.9 1455.0,261.3 C1458.6,263.7 1461.3,267.3 1461.9,271.6 C1462.5,275.9 1460.7,282.7 1458.4,287.0 C1456.1,291.3 1452.7,293.3 1448.1,297.3 C1443.5,301.3 1436.8,306.8 1430.9,311.1 C1425.0,315.4 1410.9,322.2 1412.9,323.1 C1414.9,324.0 1429.7,318.7 1443.0,316.3 C1456.3,313.9 1484.5,309.8 1492.8,308.5" stroke-width="3.8"/>
<path d="M1501.8,253.5 C1502.0,256.5 1502.2,264.3 1503.1,271.6 C1504.0,278.9 1506.0,289.4 1507.4,297.3 C1508.8,305.2 1511.0,315.6 1511.7,319.3" stroke-width="3.8"/>
<path d="M1508.3,256.1 C1510.9,256.5 1519.2,256.7 1523.8,258.7 C1528.4,260.7 1533.4,264.0 1535.8,268.1 C1538.2,272.2 1538.7,279.3 1538.4,283.6 C1538.1,287.9 1536.5,290.8 1534.1,293.9 C1531.7,297.0 1527.8,299.8 1523.8,302.5 C1519.8,305.2 1512.3,308.9 1510.0,310.2" stroke-width="3.8"/>
<path d="M1627.7,242.3 C1624.1,243.5 1612.5,246.3 1606.3,249.2 C1600.1,252.1 1594.4,255.5 1590.8,259.5 C1587.2,263.5 1584.8,269.6 1584.8,273.3 C1584.8,277.0 1586.6,280.0 1590.8,281.9 C1595.0,283.8 1603.7,283.8 1609.7,284.5 C1615.7,285.2 1623.2,284.9 1626.9,286.2 C1630.6,287.5 1632.6,290.3 1632.0,292.2 C1631.4,294.1 1628.3,295.0 1623.4,297.3 C1618.5,299.6 1605.1,305.8 1602.8,305.9 C1600.5,306.0 1608.5,299.5 1609.7,298.2" stroke-width="3.8"/>
<path d="M1638.1,226.9 C1639.4,229.2 1644.2,234.6 1645.8,240.6 C1647.4,246.6 1647.2,253.8 1647.5,263.0 C1647.8,272.2 1647.5,290.2 1647.5,295.6" stroke-width="3.8"/>
<path d="M1647.5,292.2 C1648.7,289.6 1651.5,280.7 1654.4,276.7 C1657.3,272.7 1661.8,267.8 1664.7,268.1 C1667.6,268.4 1669.9,274.1 1671.6,278.4 C1673.3,282.7 1674.4,291.3 1675.0,293.9" stroke-width="3.8"/>
<path d="M1702.5,269.0 C1699.3,269.4 1689.0,268.9 1683.6,271.6 C1678.2,274.3 1672.5,281.0 1669.9,285.3 C1667.3,289.6 1666.7,295.0 1668.1,297.3 C1669.5,299.6 1674.4,300.2 1678.4,299.1 C1682.4,298.0 1687.9,294.5 1692.2,290.5 C1696.5,286.5 1701.9,275.9 1704.2,275.0 C1706.5,274.1 1704.2,281.7 1705.9,285.3 C1707.6,288.9 1713.1,294.6 1714.5,296.5" stroke-width="3.8"/>
<path d="M1731.7,266.4 C1730.7,270.1 1726.6,280.5 1725.7,288.8 C1724.8,297.1 1725.3,308.3 1726.6,316.3 C1727.9,324.3 1731.0,331.6 1733.4,336.9 C1735.8,342.2 1739.9,346.2 1741.2,348.1" stroke-width="3.8"/>
<path d="M1728.3,271.6 C1730.9,270.3 1739.2,264.4 1743.8,263.8 C1748.4,263.2 1753.5,265.1 1755.8,268.1 C1758.1,271.1 1758.9,277.6 1757.5,281.9 C1756.1,286.2 1751.5,290.3 1747.2,293.9 C1742.9,297.5 1734.3,301.8 1731.7,303.4" stroke-width="3.8"/>
<path d="M1762.7,278.4 C1765.3,279.4 1772.1,284.2 1778.1,284.5 C1784.1,284.8 1793.1,282.6 1798.8,280.2 C1804.5,277.8 1810.5,273.8 1812.5,269.8 C1814.5,265.8 1813.7,258.8 1810.8,256.1 C1807.9,253.4 1801.0,252.1 1795.3,253.5 C1789.6,254.9 1781.3,260.2 1776.4,264.7 C1771.5,269.1 1767.5,274.5 1766.1,280.2 C1764.7,285.9 1764.4,294.4 1767.8,299.1 C1771.2,303.8 1779.2,307.2 1786.7,308.5 C1794.2,309.8 1806.2,307.8 1812.5,306.8 C1818.8,305.8 1822.5,303.2 1824.5,302.5" stroke-width="3.8"/>
<path d="M1590.0,345.0 C1590.9,353.8 1594.7,381.9 1595.6,397.5 C1596.5,413.1 1595.6,431.8 1595.6,438.7" stroke-width="3.8"/>
<path d="M1563.7,414.4 C1566.8,417.2 1578.1,427.1 1582.5,431.2 C1586.9,435.2 1588.8,437.4 1590.0,438.7" stroke-width="3.8"/>
<path d="M1620.0,401.2 C1617.5,405.6 1610.9,419.4 1605.0,427.5 C1599.1,435.6 1587.8,446.2 1584.4,450.0" stroke-width="3.8"/>
<path d="M1596.7,573.7 C1596.8,583.1 1597.7,612.5 1597.5,630.0 C1597.3,647.5 1595.9,670.6 1595.6,678.7" stroke-width="3.8"/>
<path d="M1563.7,648.7 C1566.2,651.2 1573.4,659.3 1578.7,663.7 C1584.0,668.1 1592.8,673.1 1595.6,675.0" stroke-width="3.8"/>
<path d="M1625.6,641.2 C1622.8,643.7 1614.6,651.2 1608.7,656.2 C1602.8,661.2 1593.1,668.7 1590.0,671.2" stroke-width="3.8"/>
<path d="M1376.6,548.8 C1376.2,544.2 1374.2,532.4 1374.1,521.4 C1374.0,510.4 1375.3,491.8 1376.2,482.8 C1377.1,473.8 1377.5,466.6 1379.6,467.6 C1381.7,468.6 1384.9,481.6 1388.8,488.9 C1392.7,496.2 1397.6,504.6 1403.0,511.3 C1408.4,518.0 1418.2,526.1 1421.3,529.1" stroke-width="3.8"/>
<path d="M1421.3,529.1 C1417.9,527.5 1408.7,522.7 1400.9,519.4 C1393.1,516.1 1382.1,512.1 1374.5,509.2 C1366.9,506.3 1358.8,504.1 1355.2,502.1 C1351.7,500.1 1351.7,498.9 1353.2,497.0 C1354.7,495.1 1358.1,493.1 1364.4,490.9 C1370.7,488.7 1382.0,485.5 1390.8,483.8 C1399.6,482.1 1412.0,480.3 1417.2,480.8 C1422.5,481.3 1423.7,483.2 1422.3,486.9 C1420.9,490.6 1414.7,497.7 1409.1,503.1 C1403.5,508.5 1394.7,514.3 1388.8,519.4 C1382.9,524.5 1377.2,528.5 1373.5,533.6 C1369.8,538.8 1367.9,547.5 1366.8,550.3" stroke-width="3.8"/>
<path d="M1508.6,472.7 C1504.2,475.4 1490.7,483.1 1482.2,488.9 C1473.7,494.6 1458.1,505.3 1457.8,507.2 C1457.5,509.1 1473.2,500.6 1480.2,500.1 C1487.2,499.6 1496.3,503.4 1499.5,504.1" stroke-width="3.8"/>
<path d="M1520.8,464.5 C1520.5,468.2 1519.7,479.8 1519.2,486.9 C1518.7,494.0 1518.0,503.8 1517.7,507.2" stroke-width="3.8"/>
<path d="M1489.3,518.4 C1492.5,517.9 1504.0,515.1 1508.6,515.3 C1513.2,515.5 1516.0,517.0 1516.7,519.4 C1517.4,521.8 1515.1,525.8 1512.7,529.5 C1510.3,533.2 1503.9,538.5 1502.5,541.7 C1501.1,544.9 1502.1,547.6 1504.5,548.8 C1506.9,550.0 1509.6,551.7 1516.7,548.8 C1523.8,545.9 1542.1,534.5 1547.2,531.6" stroke-width="3.8"/>
<path d="M1561.4,456.4 C1561.7,459.3 1566.3,469.1 1563.4,473.7 C1560.5,478.3 1547.3,482.1 1544.1,483.8" stroke-width="3.8"/>
<path d="M1544.1,483.8 C1547.0,483.6 1558.0,481.5 1561.4,482.4 C1564.8,483.2 1566.4,486.5 1564.5,488.9 C1562.6,491.3 1552.9,494.5 1550.2,497.0 C1547.5,499.5 1547.0,502.4 1548.2,504.1 C1549.4,505.8 1551.9,508.6 1557.3,507.2 C1562.7,505.8 1576.8,497.9 1580.7,496.0" stroke-width="3.8"/>
<path d="M1550.2,522.4 C1554.1,520.5 1566.6,513.1 1573.6,511.3 C1580.5,509.5 1588.2,509.3 1591.9,511.3 C1595.6,513.3 1595.6,516.8 1595.9,523.4 C1596.2,530.0 1594.2,546.3 1593.9,550.9" stroke-width="3.8"/>
<path d="M1610.2,479.8 C1608.7,481.0 1602.7,484.4 1601.0,486.9 C1599.3,489.4 1598.1,492.8 1600.0,495.0 C1601.9,497.2 1609.2,499.8 1612.2,500.1 C1615.2,500.4 1617.6,498.9 1618.3,497.0 C1619.0,495.1 1615.3,490.9 1616.3,488.9 C1617.3,486.9 1621.0,485.1 1624.4,484.8 C1627.8,484.5 1634.2,485.2 1636.6,486.9 C1639.0,488.6 1639.1,493.0 1638.6,495.0 C1638.1,497.0 1634.3,498.4 1633.5,499.1" stroke-width="3.8"/>
<path d="M1655.9,458.4 C1655.7,461.4 1653.8,470.3 1654.8,476.7 C1655.8,483.1 1660.8,493.6 1662.0,497.0" stroke-width="3.8"/>
<path d="M1667.0,506.2 C1663.3,509.4 1651.6,519.1 1644.7,525.5 C1637.8,531.9 1628.6,541.6 1625.4,544.8" stroke-width="3.8"/>
<path d="M1650.8,517.3 C1653.8,519.7 1662.3,527.5 1669.1,531.6 C1675.9,535.7 1687.7,540.0 1691.4,541.7" stroke-width="3.8"/>
<path d="M1752.4,525.5 C1755.4,519.7 1766.0,504.3 1770.6,490.9 C1775.2,477.5 1776.8,446.9 1779.8,445.2 C1782.8,443.5 1785.4,469.8 1788.9,480.8 C1792.5,491.8 1802.1,506.2 1801.1,511.3 C1800.1,516.4 1790.2,513.7 1782.8,511.3 C1775.3,508.9 1762.7,501.8 1756.4,497.0 C1750.1,492.2 1745.2,486.9 1745.2,482.8 C1745.2,478.8 1749.5,475.4 1756.4,472.7 C1763.4,470.0 1775.7,467.6 1786.9,466.6 C1798.1,465.6 1814.9,465.6 1823.4,466.6 C1831.9,467.6 1835.7,470.0 1837.7,472.7 C1839.7,475.4 1840.7,478.4 1835.6,482.8 C1830.5,487.2 1817.0,493.4 1807.2,499.1 C1797.4,504.9 1787.0,511.2 1776.7,517.3 C1766.4,523.4 1750.5,532.5 1745.2,535.6" stroke-width="3.8"/>
<path d="M2009.1,611.2 C2007.3,613.1 2001.5,617.7 1998.4,622.3 C1995.3,626.9 1992.3,633.1 1990.6,638.7 C1988.9,644.3 1988.0,650.5 1988.0,655.9 C1988.0,661.3 1988.6,667.6 1990.6,671.3 C1992.6,675.0 1996.4,677.6 2000.1,678.2 C2003.8,678.8 2009.0,676.3 2013.0,674.8 C2017.0,673.3 2022.2,670.1 2024.1,669.2" stroke-width="3.8"/>
<path d="M2020.7,627.1 L2052.9,618.5" stroke-width="3.8"/>
<path d="M2032.7,624.9 C2033.1,629.4 2034.3,644.4 2035.3,651.6 C2036.3,658.8 2038.2,665.2 2038.8,667.9" stroke-width="3.8"/>
<path d="M2029.3,639.5 L2062.8,634.8" stroke-width="3.8"/>
<path d="M2057.7,655.0 C2058.8,654.4 2061.3,651.2 2064.5,651.1 C2067.7,651.0 2075.2,652.0 2076.6,654.1 C2078.0,656.2 2075.1,661.0 2073.1,663.6 C2071.1,666.2 2068.1,668.0 2064.5,669.6 C2060.9,671.2 2054.3,673.4 2051.6,673.0 C2048.9,672.6 2048.0,669.3 2048.2,667.0 C2048.3,664.7 2050.9,661.3 2052.5,659.3 C2054.1,657.3 2056.8,655.7 2057.7,655.0" stroke-width="3.8"/>
<path d="M2079.6,643.0 C2079.8,645.9 2080.3,654.8 2080.9,660.2 C2081.5,665.6 2083.0,673.0 2083.4,675.6" stroke-width="3.8"/>
<path d="M2080.0,660.2 C2081.4,659.3 2085.7,656.1 2088.6,655.0 C2091.5,653.9 2095.3,652.6 2097.2,653.3 C2099.1,654.0 2099.4,658.3 2099.8,659.3" stroke-width="3.8"/>
<path d="M2104.9,644.7 C2105.2,646.6 2106.2,652.3 2106.6,655.9 C2107.0,659.5 2107.3,664.5 2107.5,666.2" stroke-width="3.8"/>
<path d="M2106.6,660.2 C2107.5,658.8 2109.9,653.3 2111.8,651.6 C2113.7,649.9 2116.2,649.2 2117.8,649.8 C2119.4,650.4 2120.6,653.1 2121.3,655.0 C2122.0,656.9 2122.0,660.0 2122.1,661.0" stroke-width="3.8"/>
<path d="M2122.1,655.0 C2123.0,654.0 2125.4,649.7 2127.3,649.0 C2129.2,648.3 2132.1,648.8 2133.3,650.7 C2134.5,652.6 2134.3,657.3 2134.6,660.2 C2134.9,663.1 2134.9,666.6 2135.0,667.9" stroke-width="3.8"/>
<path d="M2136.3,615.0 C2138.5,615.9 2145.4,617.1 2149.6,620.6 C2153.8,624.1 2158.9,630.7 2161.6,636.1 C2164.3,641.5 2165.5,647.4 2165.9,653.3 C2166.3,659.2 2165.9,666.1 2164.2,671.3 C2162.5,676.4 2159.3,680.6 2155.6,684.2 C2151.9,687.8 2144.2,691.4 2141.9,692.8" stroke-width="3.8"/>
<path d="M1412.4,724.9 C1408.5,728.2 1396.9,738.6 1389.2,744.7 C1381.5,750.8 1367.4,759.5 1366.0,761.5 C1364.6,763.5 1375.0,758.7 1380.6,756.7 C1386.2,754.8 1394.3,750.4 1399.5,749.8 C1404.7,749.2 1409.3,751.6 1411.6,753.3 C1413.9,755.0 1413.0,759.1 1413.3,760.2" stroke-width="3.8"/>
<path d="M1420.2,715.5 C1420.6,720.1 1421.9,733.5 1422.7,743.0 C1423.5,752.5 1424.9,767.3 1425.3,772.2" stroke-width="3.8"/>
<path d="M1397.8,783.4 C1401.0,782.1 1412.4,776.0 1416.7,775.6 C1421.0,775.2 1423.3,778.2 1423.6,780.8 C1423.9,783.4 1421.3,787.4 1418.4,791.1 C1415.5,794.8 1407.8,799.7 1406.4,803.1 C1405.0,806.5 1407.2,810.3 1409.8,811.7 C1412.4,813.1 1416.5,814.0 1421.9,811.7 C1427.4,809.4 1439.1,800.3 1442.5,798.0" stroke-width="3.8"/>
<path d="M1449.4,716.8 C1451.4,717.6 1459.5,719.6 1461.4,721.5 C1463.3,723.4 1463.3,724.4 1460.6,728.4 C1457.9,732.4 1447.7,742.6 1445.1,745.5" stroke-width="3.8"/>
<path d="M1445.1,745.5 C1447.4,745.1 1456.9,741.4 1458.8,743.0 C1460.7,744.6 1453.0,753.7 1456.3,755.0 C1459.6,756.3 1474.9,751.4 1478.6,750.7" stroke-width="3.8"/>
<path d="M1444.2,778.2 C1447.3,776.9 1456.5,772.6 1463.1,770.5 C1469.7,768.4 1478.9,765.0 1483.8,765.3 C1488.7,765.6 1491.2,768.5 1492.3,772.2 C1493.4,775.9 1491.2,783.3 1490.6,787.7 C1490.0,792.1 1488.0,797.2 1488.9,798.8 C1489.8,800.4 1494.7,797.4 1495.8,797.1" stroke-width="3.8"/>
<path d="M1527.6,759.3 C1529.0,758.6 1534.6,756.9 1536.2,755.0 C1537.8,753.1 1538.0,750.0 1537.0,748.1 C1536.0,746.2 1532.8,744.9 1530.2,743.8 C1527.6,742.7 1524.5,740.9 1521.6,741.3 C1518.7,741.7 1515.0,744.1 1513.0,746.4 C1511.0,748.7 1509.2,752.7 1509.5,755.0 C1509.8,757.3 1512.7,759.5 1514.7,760.2 C1516.7,760.9 1519.9,760.7 1521.6,759.3 C1523.3,757.9 1524.4,752.9 1525.0,751.6" stroke-width="3.8"/>
<path d="M1551.6,724.1 C1551.2,727.2 1549.5,735.9 1549.1,743.0 C1548.7,750.1 1549.1,763.0 1549.1,767.0" stroke-width="3.8"/>
<path d="M1555.9,763.6 C1551.9,766.8 1538.8,775.8 1531.9,782.5 C1525.0,789.2 1517.6,800.4 1514.7,804.0" stroke-width="3.8"/>
<path d="M1531.9,782.5 C1534.2,783.6 1541.9,787.1 1545.6,789.4 C1549.3,791.7 1551.6,793.4 1554.2,796.3 C1556.8,799.2 1559.9,804.9 1561.1,806.6" stroke-width="3.8"/>
<path d="M1600.6,751.6 C1598.6,751.9 1590.9,751.3 1588.6,753.3 C1586.3,755.3 1585.8,761.5 1586.9,763.6 C1588.1,765.8 1592.6,766.6 1595.5,766.2 C1598.4,765.8 1602.9,763.1 1604.1,761.0 C1605.2,758.9 1603.3,755.0 1602.4,753.3 C1601.5,751.6 1599.5,751.1 1598.9,750.7" stroke-width="3.8"/>
<path d="M1613.5,730.9 C1613.9,733.2 1613.7,741.7 1616.1,744.7 C1618.5,747.7 1623.8,749.3 1628.1,749.0 C1632.4,748.7 1640.8,744.6 1641.9,743.0 C1643.1,741.4 1636.2,740.1 1635.0,739.5" stroke-width="3.8"/>
<path d="M1606.6,773.9 C1607.9,776.2 1611.7,784.6 1614.4,787.7 C1617.1,790.9 1619.6,793.1 1623.0,792.8 C1626.4,792.5 1632.4,788.5 1635.0,785.9 C1637.6,783.3 1637.8,778.7 1638.4,777.3" stroke-width="3.8"/>
<path d="M1678.0,756.7 C1677.4,755.3 1677.1,750.4 1674.5,748.1 C1671.9,745.8 1666.2,743.3 1662.5,743.0 C1658.8,742.7 1654.5,744.1 1652.2,746.4 C1649.9,748.7 1648.2,754.1 1648.8,756.7 C1649.4,759.3 1652.2,761.3 1655.6,761.9 C1659.0,762.5 1665.7,761.4 1669.4,760.2 C1673.1,759.1 1676.6,755.9 1678.0,755.0" stroke-width="3.8"/>
<path d="M1696.9,729.2 C1697.2,734.1 1697.4,749.0 1698.6,758.4 C1699.8,767.8 1701.9,779.3 1703.8,785.9 C1705.7,792.5 1708.8,796.0 1709.8,798.0" stroke-width="3.8"/>
<path d="M1739.9,749.8 C1743.3,748.9 1756.5,744.7 1760.5,744.7 C1764.5,744.7 1764.8,747.2 1763.9,749.8 C1763.0,752.4 1758.2,757.0 1755.3,760.2 C1752.4,763.4 1747.5,766.5 1746.7,768.8 C1745.9,771.1 1747.6,773.3 1750.2,773.9 C1752.8,774.5 1757.1,774.2 1762.2,772.2 C1767.3,770.2 1777.9,763.6 1781.1,761.9" stroke-width="3.8"/>
<path d="M1794.9,727.5 C1795.3,732.1 1796.8,745.8 1797.4,755.0 C1798.0,764.2 1798.2,777.9 1798.3,782.5" stroke-width="3.8"/>
<path d="M1499.2,832.0 C1513.2,831.6 1549.3,831.8 1583.4,829.8 C1617.5,827.8 1667.7,822.7 1703.8,820.3 C1739.9,817.9 1784.0,816.1 1800.0,815.2" stroke-width="3.8"/>
<path d="M1702.0,841.8 C1708.0,842.4 1721.8,844.6 1738.1,845.2 C1754.4,845.8 1789.7,845.2 1800.0,845.2" stroke-width="3.8"/>
<path d="M1800.3,722.3 C1800.4,727.4 1800.5,742.6 1800.7,752.8 C1800.9,763.0 1801.2,778.2 1801.3,783.3" stroke-width="3.8"/>
<path d="M1780.0,758.9 L1818.6,750.8" stroke-width="3.8"/>
<path d="M1840.9,752.8 C1839.9,754.1 1835.1,758.2 1834.8,760.9 C1834.5,763.6 1836.9,767.4 1838.9,769.1 C1840.9,770.8 1845.1,772.5 1847.0,771.1 C1848.9,769.7 1850.4,764.0 1850.1,760.9 C1849.8,757.8 1846.5,754.1 1845.0,752.8 C1843.5,751.4 1841.6,752.8 1840.9,752.8" stroke-width="3.8"/>
<path d="M1865.3,722.3 C1865.5,725.3 1866.0,734.2 1866.3,740.6 C1866.6,747.0 1867.1,757.5 1867.3,760.9" stroke-width="3.8"/>
<path d="M1867.3,740.6 L1895.8,739.6" stroke-width="3.8"/>
<path d="M1869.4,750.8 L1891.7,748.8" stroke-width="3.8"/>
<path d="M1889.7,775.2 C1887.0,775.5 1877.1,774.8 1873.4,777.2 C1869.7,779.6 1865.9,787.0 1867.3,789.4 C1868.7,791.8 1876.8,792.8 1881.6,791.4 C1886.3,790.0 1894.1,784.0 1895.8,781.3 C1897.5,778.6 1892.4,776.2 1891.7,775.2" stroke-width="3.8"/>
<path d="M1914.1,714.2 L1925.2,724.0" stroke-width="3.8"/>
<path d="M1920.2,733.5 L1931.3,730.5" stroke-width="3.8"/>
<path d="M1924.2,755.9 C1922.8,756.7 1917.6,758.4 1916.1,760.9 C1914.6,763.4 1913.4,768.5 1915.1,771.1 C1916.8,773.7 1922.6,776.5 1926.3,776.2 C1930.0,775.9 1936.1,772.0 1937.4,769.1 C1938.8,766.2 1936.6,761.1 1934.4,758.9 C1932.2,756.7 1925.9,756.4 1924.2,755.9" stroke-width="3.8"/>
<path d="M1938.4,724.4 C1938.8,728.5 1939.1,744.4 1940.5,748.8 C1941.9,753.2 1943.2,750.0 1946.6,750.8 C1950.0,751.6 1958.4,753.3 1960.8,753.8" stroke-width="3.8"/>
<path d="M1942.5,779.2 C1942.8,781.2 1942.5,788.7 1944.5,791.4 C1946.5,794.1 1950.0,795.2 1954.7,795.5 C1959.5,795.8 1967.9,794.8 1973.0,793.4 C1978.1,792.0 1983.2,788.3 1985.2,787.3" stroke-width="3.8"/>
<path d="M1780.0,815.8 C1796.9,814.8 1847.8,811.7 1881.6,809.7 C1915.4,807.7 1949.2,805.1 1983.1,803.6 C2016.9,802.1 2046.8,801.6 2084.7,800.5 C2122.6,799.4 2189.6,797.7 2210.6,797.1" stroke-width="3.8"/>
<path d="M1780.0,847.3 C1796.9,846.1 1841.0,842.8 1881.6,840.2 C1922.2,837.7 1961.8,835.0 2023.8,832.0 C2085.8,829.0 2215.1,823.6 2253.3,821.9" stroke-width="3.8"/>
<path d="M2001.5,715.1 C2002.8,716.4 2007.1,720.5 2009.4,723.0 C2011.7,725.5 2014.2,728.4 2015.4,730.3 C2016.7,732.2 2016.7,733.8 2016.9,734.5" stroke-width="3.8"/>
<path d="M2011.8,746.0 C2010.6,747.8 2005.5,753.3 2004.5,756.9 C2003.5,760.5 2003.7,765.7 2005.7,767.8 C2007.7,769.9 2012.1,770.4 2016.6,769.6 C2021.0,768.8 2027.4,766.1 2032.4,763.0 C2037.5,759.9 2043.7,755.4 2046.9,750.9 C2050.1,746.4 2051.0,738.2 2051.8,735.7" stroke-width="3.8"/>
<path d="M2014.2,748.4 C2017.8,747.0 2029.8,742.0 2036.0,740.0 C2042.2,738.0 2048.7,736.9 2051.2,736.3" stroke-width="3.8"/>
<path d="M2042.1,720.6 C2042.3,723.2 2042.7,731.2 2043.3,736.3 C2043.9,741.3 2045.5,746.4 2045.7,750.9 C2045.9,755.4 2044.7,761.0 2044.5,763.0" stroke-width="3.8"/>
<path d="M2040.9,772.7 C2040.1,774.3 2036.4,779.3 2036.0,782.3 C2035.6,785.3 2035.6,789.6 2038.4,790.8 C2041.2,792.0 2048.2,791.0 2053.0,789.6 C2057.8,788.2 2064.9,785.3 2067.5,782.3 C2070.1,779.3 2071.5,773.8 2068.7,771.4 C2065.9,769.0 2056.2,767.6 2050.5,767.8 C2044.8,768.0 2037.4,771.9 2034.8,772.7" stroke-width="3.8"/>
<path d="M2059.0,731.5 C2061.6,730.7 2070.0,727.2 2074.8,726.6 C2079.7,726.0 2087.7,726.1 2088.1,727.9 C2088.5,729.7 2081.4,734.1 2077.2,737.5 C2073.0,740.9 2065.4,745.0 2062.7,748.4 C2060.0,751.8 2059.8,755.7 2060.8,758.1 C2061.8,760.5 2064.8,762.6 2068.7,763.0 C2072.6,763.4 2080.5,761.3 2084.5,760.5 C2088.5,759.7 2091.5,758.5 2092.9,758.1" stroke-width="3.8"/>
<path d="M2095.4,750.9 C2095.7,748.5 2094.6,739.6 2097.2,736.3 C2099.8,733.0 2108.2,730.7 2111.1,730.9 C2114.0,731.1 2113.5,733.0 2114.7,737.5 C2115.9,742.0 2117.8,754.7 2118.4,758.1" stroke-width="3.8"/>
<path d="M2131.7,730.3 C2131.3,733.7 2128.7,743.8 2129.3,750.9 C2129.9,758.0 2132.7,767.1 2135.3,772.7 C2137.9,778.4 2143.0,780.8 2145.0,784.8 C2147.0,788.8 2147.0,794.9 2147.4,796.9" stroke-width="3.8"/>
<path d="M2151.1,724.2 C2154.1,723.2 2168.8,717.0 2169.2,718.2 C2169.6,719.4 2156.5,727.9 2153.5,731.5 C2150.5,735.1 2150.1,738.0 2151.1,740.0 C2152.1,742.0 2154.7,744.4 2159.5,743.6 C2164.3,742.8 2176.7,736.5 2180.1,735.1" stroke-width="3.8"/>
<path d="M2148.6,759.3 L2182.5,751.5" stroke-width="3.8"/>
<path d="M2152.3,773.9 C2157.6,772.5 2177.8,766.4 2183.8,765.4 C2189.9,764.4 2189.4,766.4 2188.6,767.8 C2187.8,769.2 2182.1,771.1 2178.9,773.9 C2175.7,776.7 2170.6,781.8 2169.2,784.8 C2167.8,787.8 2167.6,790.3 2170.4,792.0 C2173.2,793.7 2179.1,794.5 2186.2,795.1 C2193.3,795.7 2208.4,795.6 2212.8,795.7" stroke-width="3.8"/>
<path d="M2217.1,715.7 C2218.6,717.1 2223.4,721.4 2226.1,724.2 C2228.8,727.0 2233.2,730.3 2233.4,732.7 C2233.6,735.1 2230.5,737.6 2227.3,738.8 C2224.1,740.0 2216.2,739.8 2214.0,740.0" stroke-width="3.8"/>
<path d="M2215.2,740.0 C2219.0,740.2 2236.4,739.4 2238.2,741.2 C2240.0,743.0 2230.7,747.7 2226.1,750.9 C2221.5,754.1 2213.2,757.7 2210.4,760.5 C2207.6,763.3 2207.6,767.0 2209.2,767.8 C2210.8,768.6 2213.6,766.4 2220.1,765.4 C2226.6,764.4 2245.9,759.8 2247.9,761.8 C2249.9,763.8 2237.2,772.9 2232.2,777.5 C2227.2,782.1 2219.7,787.0 2217.7,789.6 C2215.7,792.2 2215.7,793.4 2220.1,793.2 C2224.5,793.0 2236.2,789.8 2244.3,788.4 C2252.4,787.0 2261.6,785.3 2268.5,784.8 C2275.4,784.3 2283.1,784.8 2285.5,785.4 C2287.9,786.0 2283.4,787.9 2283.0,788.4" stroke-width="3.8"/>
<path d="M1496.0,866.7 C1498.0,866.1 1503.5,863.9 1507.8,863.2 C1512.1,862.5 1518.8,861.8 1521.7,862.5 C1524.6,863.2 1524.9,864.6 1525.1,867.4 C1525.3,870.2 1524.6,875.6 1523.1,879.2 C1521.6,882.8 1518.6,886.9 1516.1,888.9 C1513.5,890.9 1511.3,889.4 1507.8,891.0 C1504.3,892.6 1497.4,897.3 1495.3,898.6" stroke-width="3.8"/>
<path d="M1516.8,889.6 C1517.2,893.4 1517.9,905.2 1518.9,912.5 C1520.0,919.8 1522.4,929.8 1523.1,933.3" stroke-width="3.8"/>
<path d="M1567.5,862.8 C1565.4,864.1 1558.6,867.7 1555.0,870.8 C1551.4,873.9 1549.0,877.8 1546.0,881.2 C1543.0,884.6 1538.4,889.4 1536.9,891.0" stroke-width="3.8"/>
<path d="M1546.7,881.9 C1548.0,882.0 1551.1,881.0 1554.3,882.6 C1557.5,884.2 1564.1,890.2 1566.1,891.7" stroke-width="3.8"/>
<path d="M1569.6,878.5 C1571.9,877.5 1579.3,873.4 1583.5,872.2 C1587.7,871.0 1592.2,870.7 1594.6,871.5 C1597.0,872.3 1598.1,874.4 1598.1,877.1 C1598.1,879.8 1597.5,883.2 1594.6,887.5 C1591.7,891.8 1584.1,899.6 1580.7,902.8 C1577.3,906.0 1575.5,906.2 1574.4,906.9" stroke-width="3.8"/>
<path d="M1575.8,906.9 C1578.3,906.5 1585.4,904.2 1591.1,904.2 C1596.8,904.2 1606.1,905.5 1609.9,906.9 C1613.7,908.3 1614.6,910.5 1614.0,912.5 C1613.4,914.5 1610.8,916.9 1606.4,918.8 C1602.0,920.6 1592.5,922.6 1587.6,923.6 C1582.7,924.6 1579.7,925.7 1577.2,925.0 C1574.7,924.3 1572.8,921.7 1572.4,919.4 C1572.1,917.1 1573.7,913.4 1575.1,911.1 C1576.5,908.8 1579.8,906.5 1580.7,905.6" stroke-width="3.8"/>
<path d="M900,444 C907.0,443.3 926.7,443.2 942,440 C957.3,436.8 976.5,431.3 992,425 C1007.5,418.7 1023.3,410.3 1035,402 C1046.7,393.7 1056.2,384.5 1062,375 C1067.8,365.5 1071.2,355.8 1070,345 C1068.8,334.2 1063.8,320.0 1055,310 C1046.2,300.0 1031.7,290.5 1017,285 C1002.3,279.5 983.7,277.8 967,277 C950.3,276.2 933.7,277.0 917,280 C900.3,283.0 881.5,288.3 867,295 C852.5,301.7 839.2,311.3 830,320 C820.8,328.7 814.5,337.5 812,347 C809.5,356.5 810.0,366.5 815,377 C820.0,387.5 830.3,400.3 842,410 C853.7,419.7 871.7,429.2 885,435 C898.3,440.8 915.8,443.3 922,445" stroke-width="3.8"/>
<path d="M880,587 C875.0,582.5 858.0,570.0 850,560 C842.0,550.0 834.5,537.5 832,527 C829.5,516.5 831.2,505.3 835,497 C838.8,488.7 845.5,482.2 855,477 C864.5,471.8 877.5,468.5 892,466 C906.5,463.5 925.3,461.3 942,462 C958.7,462.7 979.0,465.8 992,470 C1005.0,474.2 1014.2,480.3 1020,487 C1025.8,493.7 1027.0,502.0 1027,510 C1027.0,518.0 1024.5,525.8 1020,535 C1015.5,544.2 1007.5,555.8 1000,565 C992.5,574.2 982.5,583.3 975,590 C967.5,596.7 965.5,598.2 955,605 C944.5,611.8 919.2,626.7 912,631" stroke-width="3.8"/>
<path d="M880,825 C875.8,821.7 863.3,813.3 855,805 C846.7,796.7 835.8,785.5 830,775 C824.2,764.5 820.0,751.2 820,742 C820.0,732.8 823.3,726.7 830,720 C836.7,713.3 847.5,706.2 860,702 C872.5,697.8 891.3,695.8 905,695 C918.7,694.2 931.2,694.5 942,697 C952.8,699.5 963.3,703.7 970,710 C976.7,716.3 980.8,725.8 982,735 C983.2,744.2 981.5,755.5 977,765 C972.5,774.5 963.7,782.8 955,792 C946.3,801.2 935.5,811.0 925,820 C914.5,829.0 897.5,841.7 892,846" stroke-width="3.8"/>
<path d="M940,994 C935.0,993.7 918.8,994.3 910,992 C901.2,989.7 892.8,986.2 887,980 C881.2,973.8 876.2,964.2 875,955 C873.8,945.8 875.8,934.2 880,925 C884.2,915.8 893.3,906.7 900,900 C906.7,893.3 912.5,887.7 920,885 C927.5,882.3 936.7,881.2 945,884 C953.3,886.8 964.2,893.2 970,902 C975.8,910.8 978.5,926.2 980,937 C981.5,947.8 979.2,962.0 979,967" stroke-width="3.8"/>
<path d="M957,1084 C956.5,1086.7 952.7,1094.5 954,1100 C955.3,1105.5 958.7,1112.5 965,1117 C971.3,1121.5 987.5,1125.3 992,1127" stroke-width="3.8"/>
</g></svg>
</body></html>
